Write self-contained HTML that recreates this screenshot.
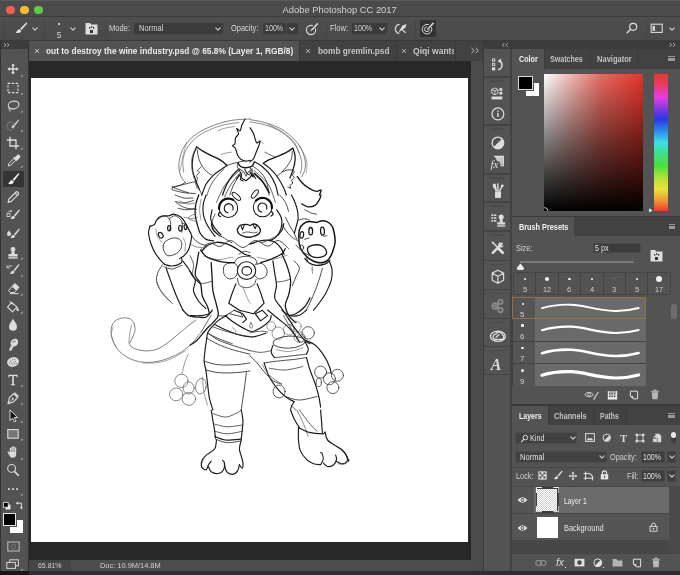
<!DOCTYPE html>
<html lang="en"><head><meta charset="utf-8"><title>Adobe Photoshop CC 2017</title>
<style>
html,body{margin:0;padding:0;background:#535353;}
body{width:680px;height:575px;overflow:hidden;position:relative;font-family:"Liberation Sans",sans-serif;}
#app{position:absolute;left:0;top:0;width:680px;height:575px;overflow:hidden;will-change:transform;}
#app div,#app svg,#app span{position:absolute;display:block;}
#app span{white-space:pre;line-height:1;transform-origin:0 50%;}
</style></head>
<body>
<div id="app">
<div style="left:0px;top:0px;width:680px;height:16px;background:#4b4b4b;"></div>
<div style="left:0px;top:16px;width:680px;height:25px;background:#4b4b4b;border-top:1px solid #3c3c3c;box-sizing:border-box;background:linear-gradient(#4e4e4e,#4a4a4a);"></div>
<div style="left:0px;top:0px;width:680px;height:1px;background:#5a5a5a;"></div>
<div style="left:0px;top:40px;width:680px;height:1px;background:#3a3a3a;"></div>
<div style="left:6.199999999999999px;top:5.5px;width:8.8px;height:8.8px;background:#f25e57;border-radius:50%;"></div>
<div style="left:20.0px;top:5.5px;width:8.8px;height:8.8px;background:#f6bc30;border-radius:50%;"></div>
<div style="left:34.1px;top:5.5px;width:8.8px;height:8.8px;background:#5ccb44;border-radius:50%;"></div>
<span style="left:282.6px;top:5.10px;font-size:9.4px;font-weight:400;color:#d2d2d2;">Adobe Photoshop CC 2017</span>
<div style="left:3px;top:21px;width:1px;height:16px;background:#434343;"></div>
<svg style="left:14px;top:21px;" width="14" height="14" viewBox="0 0 14 14"><path d="M12.6 1.2 L6.2 7.6 L7.6 9 L13.2 2.4 Z" fill="#e0e0e0"/><path d="M5.6 8.2 C3.6 8.2 3.4 10.4 1.6 11.6 C3.6 12.6 7 12.2 7.2 9.6 Z" fill="#e0e0e0"/></svg>
<svg style="left:30.5px;top:25px;" width="8" height="8" viewBox="0 0 8 8"><path d="M1.7999999999999998 2.9L4 5.1L6.2 2.9" fill="none" stroke="#d0d0d0" stroke-width="1.1" stroke-linecap="round" stroke-linejoin="round"/></svg>
<div style="left:44px;top:21px;width:1px;height:16px;background:#434343;"></div>
<div style="left:58.4px;top:23.3px;width:1.4px;height:1.4px;background:#e0e0e0;border-radius:50%;"></div>
<span style="left:56.8px;top:30.55px;font-size:8.5px;font-weight:400;color:#d8d8d8;">5</span>
<svg style="left:69px;top:24.5px;" width="8" height="8" viewBox="0 0 8 8"><path d="M1.7999999999999998 2.9L4 5.1L6.2 2.9" fill="none" stroke="#d0d0d0" stroke-width="1.1" stroke-linecap="round" stroke-linejoin="round"/></svg>
<svg style="left:85px;top:22px;" width="13" height="13" viewBox="0 0 13 13"><path d="M0.5 1 h4.5 l1.2 1.6 h6.3 v9.9 h-12 z" fill="#dedede"/><rect x="5" y="8" width="3" height="3" fill="#333"/><rect x="4" y="5" width="1.3" height="1.6" fill="#333"/><rect x="6" y="4.2" width="1.3" height="1.6" fill="#333"/><rect x="8" y="5" width="1.3" height="1.6" fill="#333"/></svg>
<div style="left:105px;top:21px;width:1px;height:16px;background:#434343;"></div>
<span style="left:108.5px;top:24.25px;font-size:8.5px;font-weight:400;color:#d6d6d6;transform:scaleX(0.889);">Mode:</span>
<div style="left:134.4px;top:22.8px;width:89px;height:11px;background:#3b3b3b;border-radius:1.5px;"></div>
<span style="left:139px;top:24.25px;font-size:8.5px;font-weight:400;color:#d6d6d6;transform:scaleX(0.894);">Normal</span>
<svg style="left:213.5px;top:24.7px;" width="8" height="8" viewBox="0 0 8 8"><path d="M1.7999999999999998 2.9L4 5.1L6.2 2.9" fill="none" stroke="#d0d0d0" stroke-width="1.1" stroke-linecap="round" stroke-linejoin="round"/></svg>
<span style="left:230.6px;top:24.25px;font-size:8.5px;font-weight:400;color:#d6d6d6;transform:scaleX(0.879);">Opacity:</span>
<div style="left:262.9px;top:22.8px;width:23.6px;height:11px;background:#3b3b3b;border-radius:1.5px;"></div>
<div style="left:287.2px;top:22.8px;width:10.4px;height:11px;background:#3b3b3b;border-radius:1.5px;"></div>
<span style="left:265px;top:24.25px;font-size:8.5px;font-weight:400;color:#d6d6d6;transform:scaleX(0.837);">100%</span>
<svg style="left:288.4px;top:24.7px;" width="8" height="8" viewBox="0 0 8 8"><path d="M1.7999999999999998 2.9L4 5.1L6.2 2.9" fill="none" stroke="#d0d0d0" stroke-width="1.1" stroke-linecap="round" stroke-linejoin="round"/></svg>
<svg style="left:304px;top:21px;" width="16" height="16" viewBox="0 0 16 16"><circle cx="7" cy="9" r="4.6" fill="none" stroke="#dcdcdc" stroke-width="1.1"/><path d="M7.2 9.4 L13 2.6" stroke="#484848" stroke-width="3.4"/><path d="M6.6 9.8 L8 8 L13.2 2.2 L14 3 L8.6 8.8 Z" fill="#e4e4e4" stroke="#e4e4e4" stroke-width="0.6"/></svg>
<div style="left:326px;top:21px;width:1px;height:16px;background:#434343;"></div>
<span style="left:329.8px;top:24.25px;font-size:8.5px;font-weight:400;color:#d6d6d6;transform:scaleX(0.896);">Flow:</span>
<div style="left:351.5px;top:22.8px;width:24.2px;height:11px;background:#3b3b3b;border-radius:1.5px;"></div>
<div style="left:376.4px;top:22.8px;width:10.4px;height:11px;background:#3b3b3b;border-radius:1.5px;"></div>
<span style="left:353.6px;top:24.25px;font-size:8.5px;font-weight:400;color:#d6d6d6;transform:scaleX(0.837);">100%</span>
<svg style="left:377.6px;top:24.7px;" width="8" height="8" viewBox="0 0 8 8"><path d="M1.7999999999999998 2.9L4 5.1L6.2 2.9" fill="none" stroke="#d0d0d0" stroke-width="1.1" stroke-linecap="round" stroke-linejoin="round"/></svg>
<svg style="left:393px;top:21px;" width="16" height="16" viewBox="0 0 16 16"><path d="M6.6 3.4 C3.6 3.6 2 6 2.4 8.6 C2.8 11 4.6 12.4 6.6 12.2" fill="none" stroke="#dcdcdc" stroke-width="1.2"/><path d="M5.4 11.6 L9.4 4.4 L13.4 3 L12.6 6.4 Z" fill="#dcdcdc"/><path d="M8.8 8.4 L12.6 11.8" stroke="#dcdcdc" stroke-width="1.2"/></svg>
<div style="left:415px;top:21px;width:1px;height:16px;background:#434343;"></div>
<div style="left:420px;top:20.4px;width:16px;height:16.2px;background:#333;"></div>
<svg style="left:420px;top:20.4px;" width="16" height="16.2" viewBox="0 0 16 16.2"><circle cx="7" cy="9.2" r="4.8" fill="none" stroke="#d4d4d4" stroke-width="1"/><circle cx="7" cy="9.2" r="2.4" fill="none" stroke="#d4d4d4" stroke-width="1"/><path d="M7.4 9 L12.6 3" stroke="#333" stroke-width="3.4"/><path d="M7 9.6 L8.2 8 L13 2.6 L13.8 3.4 L8.8 8.8 Z" fill="#e4e4e4" stroke="#e4e4e4" stroke-width="0.5"/></svg>
<svg style="left:625px;top:21px;" width="14" height="14" viewBox="0 0 14 14"><circle cx="8.2" cy="5.8" r="3.5" fill="none" stroke="#dcdcdc" stroke-width="1.2"/><path d="M5.7 8.3 L2.2 11.8" stroke="#dcdcdc" stroke-width="1.4" stroke-linecap="round"/></svg>
<div style="left:645.6px;top:21px;width:1px;height:16px;background:#434343;"></div>
<svg style="left:650px;top:23px;" width="14" height="11" viewBox="0 0 14 11"><rect x="1.2" y="1.2" width="11" height="8.2" fill="none" stroke="#dcdcdc" stroke-width="1.1"/><rect x="2.6" y="3" width="2.4" height="4.8" fill="#dcdcdc"/></svg>
<svg style="left:668px;top:24.7px;" width="8" height="8" viewBox="0 0 8 8"><path d="M1.7999999999999998 2.9L4 5.1L6.2 2.9" fill="none" stroke="#d0d0d0" stroke-width="1.1" stroke-linecap="round" stroke-linejoin="round"/></svg>
<div style="left:0px;top:41px;width:29px;height:530px;background:#333;"></div>
<div style="left:1px;top:41px;width:26.5px;height:8px;background:#3c3c3c;"></div>
<svg style="left:3px;top:42px;" width="8" height="6" viewBox="0 0 8 6"><path d="M1 1.2 L3 3 L1 4.8 M4 1.2 L6 3 L4 4.8" fill="none" stroke="#b8b8b8" stroke-width="0.8"/></svg>
<div style="left:1px;top:49px;width:26.5px;height:522px;background:#535353;"></div>
<div style="left:7px;top:51.5px;width:13px;height:1.5px;background:#4b4b4b;"></div>
<div style="left:29px;top:41px;width:454.5px;height:19.7px;background:#424242;"></div>
<div style="left:29px;top:41px;width:270px;height:19.7px;background:#535353;"></div>
<div style="left:298.9px;top:41px;width:1px;height:19.7px;background:#383838;"></div>
<div style="left:396px;top:41px;width:1px;height:19.7px;background:#383838;"></div>
<div style="left:454.7px;top:41px;width:1px;height:19.7px;background:#383838;"></div>
<svg style="left:33.5px;top:47.6px;" width="6" height="6" viewBox="0 0 6 6"><path d="M1 1 L5 5 M5 1 L1 5" stroke="#c8c8c8" stroke-width="0.9"/></svg>
<span style="left:46px;top:46.50px;font-size:8.6px;font-weight:700;color:#ececec;transform:scaleX(0.973);">out to destroy the wine industry.psd @ 65.8% (Layer 1, RGB/8)</span>
<svg style="left:304.7px;top:47.6px;" width="6" height="6" viewBox="0 0 6 6"><path d="M1 1 L5 5 M5 1 L1 5" stroke="#b4b4b4" stroke-width="0.9"/></svg>
<span style="left:317.6px;top:46.50px;font-size:8.6px;font-weight:700;color:#c4c4c4;transform:scaleX(0.959);">bomb gremlin.psd</span>
<svg style="left:401.4px;top:47.6px;" width="6" height="6" viewBox="0 0 6 6"><path d="M1 1 L5 5 M5 1 L1 5" stroke="#b4b4b4" stroke-width="0.9"/></svg>
<div style="left:413.2px;top:41px;width:41.2px;height:19.7px;overflow:hidden;"><span style="left:0.0px;top:5.50px;font-size:8.6px;font-weight:700;color:#c4c4c4;transform:scaleX(0.994);">Qiqi wants</span></div>
<svg style="left:470px;top:47px;" width="10" height="8" viewBox="0 0 10 8"><path d="M1.5 1 L4.2 3.6 L1.5 6.2 M5.6 1 L8.3 3.6 L5.6 6.2" fill="none" stroke="#c0c0c0" stroke-width="1"/></svg>
<div style="left:29px;top:60.7px;width:442px;height:499px;background:#282828;"></div>
<div style="left:31.4px;top:78.3px;width:436.9px;height:463.7px;background:#ffffff;"></div>
<div style="left:471px;top:60.7px;width:12.5px;height:510px;background:#4b4b4b;"></div>
<div style="left:29px;top:559.7px;width:442px;height:11px;background:#4d4d4d;"></div>
<div style="left:29px;top:559.7px;width:41.5px;height:11px;background:#464646;"></div>
<span style="left:38px;top:561.60px;font-size:8px;font-weight:400;color:#d0d0d0;transform:scaleX(0.866);">65.81%</span>
<span style="left:99.8px;top:561.60px;font-size:8px;font-weight:400;color:#d0d0d0;transform:scaleX(0.928);">Doc: 10.9M/14.8M</span>
<div style="left:3px;top:170.8px;width:21px;height:16.2px;background:#343434;"></div>
<svg style="left:4px;top:60.3px;" width="18" height="18" viewBox="0 0 18 18"><path d="M9 3.4 L11 5.8 H9.7 V8.3 H12.2 V7 L14.6 9 L12.2 11 V9.7 H9.7 V12.2 H11 L9 14.6 L7 12.2 H8.3 V9.7 H5.8 V11 L3.4 9 L5.8 7 V8.3 H8.3 V5.8 H7 Z" fill="#dcdcdc"/></svg>
<svg style="left:20.4px;top:73.7px;" width="3" height="3" viewBox="0 0 3 3"><path d="M2.6 0.4 V2.6 H0.4 Z" fill="#bdbdbd"/></svg>
<svg style="left:4px;top:78.5px;" width="18" height="18" viewBox="0 0 18 18"><rect x="4" y="4.4" width="10" height="9.2" fill="none" stroke="#dcdcdc" stroke-width="1.1" stroke-dasharray="2.4 1.4"/></svg>
<svg style="left:20.4px;top:91.9px;" width="3" height="3" viewBox="0 0 3 3"><path d="M2.6 0.4 V2.6 H0.4 Z" fill="#bdbdbd"/></svg>
<svg style="left:4px;top:97px;" width="18" height="18" viewBox="0 0 18 18"><ellipse cx="9.6" cy="8" rx="5.4" ry="3.8" fill="none" stroke="#dcdcdc" stroke-width="1.1" transform="rotate(-12 9.6 8)"/><path d="M6 10.8 C4.6 11 4.4 12.6 5.6 13 C6.4 13.2 6.6 14 5.8 14.6" fill="none" stroke="#dcdcdc" stroke-width="1"/></svg>
<svg style="left:20.4px;top:110.4px;" width="3" height="3" viewBox="0 0 3 3"><path d="M2.6 0.4 V2.6 H0.4 Z" fill="#bdbdbd"/></svg>
<svg style="left:4px;top:115.6px;" width="18" height="18" viewBox="0 0 18 18"><ellipse cx="6.6" cy="10" rx="3.4" ry="4" fill="none" stroke="#a8a8a8" stroke-width="0.9" stroke-dasharray="1.2 0.9"/><path d="M14.4 3.4 L10 8.6 L11.2 9.6 L15 4.2 Z" fill="#dcdcdc"/><path d="M9.6 9 C8.4 9 8.2 10.6 7 11.4 C8.4 12.2 10.8 11.8 11 10 Z" fill="#dcdcdc"/></svg>
<svg style="left:20.4px;top:129.0px;" width="3" height="3" viewBox="0 0 3 3"><path d="M2.6 0.4 V2.6 H0.4 Z" fill="#bdbdbd"/></svg>
<svg style="left:4px;top:133.5px;" width="18" height="18" viewBox="0 0 18 18"><path d="M6 2.8 V12 H15.2 M2.8 6 H12 V15.2" fill="none" stroke="#dcdcdc" stroke-width="1.3"/></svg>
<svg style="left:20.4px;top:146.9px;" width="3" height="3" viewBox="0 0 3 3"><path d="M2.6 0.4 V2.6 H0.4 Z" fill="#bdbdbd"/></svg>
<svg style="left:4px;top:151.8px;" width="18" height="18" viewBox="0 0 18 18"><path d="M4.2 14 L5 11.4 L10 6.4 L11.8 8.2 L6.8 13.2 Z" fill="none" stroke="#dcdcdc" stroke-width="1"/><path d="M9.6 5.2 L12.8 8.4 M10.8 6.4 L13.6 3.6 a1.3 1.3 0 0 1 1.8 1.8 L12.6 8.2" stroke="#dcdcdc" stroke-width="1.4" fill="#dcdcdc"/></svg>
<svg style="left:20.4px;top:165.20000000000002px;" width="3" height="3" viewBox="0 0 3 3"><path d="M2.6 0.4 V2.6 H0.4 Z" fill="#bdbdbd"/></svg>
<svg style="left:4px;top:169.7px;" width="18" height="18" viewBox="0 0 18 18"><path d="M14.6 3 L8.6 9.6 L10 11 L15.4 4 Z" fill="#f2f2f2"/><path d="M8 10.2 C6 10 5.8 12.4 4 13.6 C6 14.8 9.6 14.4 9.8 11.6 Z" fill="#f2f2f2"/></svg>
<svg style="left:4px;top:188px;" width="18" height="18" viewBox="0 0 18 18"><path d="M4 14.4 L5 11 L12 4 a1 1 0 0 1 1.4 0 L14.4 5 a1 1 0 0 1 0 1.4 L7.4 13.4 Z M11 5 L13.4 7.4" fill="none" stroke="#dcdcdc" stroke-width="1.1" stroke-linejoin="round"/></svg>
<svg style="left:4px;top:206px;" width="18" height="18" viewBox="0 0 18 18"><path d="M15 3.4 L10 9.2 L11.2 10.4 L15.8 4.4 Z" fill="#dcdcdc"/><path d="M9.4 9.8 C8 9.8 7.8 11.6 6.4 12.6 C8 13.6 10.8 13.2 11 11 Z" fill="#dcdcdc"/><rect x="3" y="7.6" width="3" height="3" fill="none" stroke="#dcdcdc" stroke-width="0.8"/><path d="M4 6.4 C4.4 4.8 6 4.4 7.2 5.2 M7.4 4 V5.6 H5.8" fill="none" stroke="#dcdcdc" stroke-width="0.8"/></svg>
<svg style="left:4px;top:224.5px;" width="18" height="18" viewBox="0 0 18 18"><path d="M15 3.4 L10 9.2 L11.2 10.4 L15.8 4.4 Z" fill="#dcdcdc"/><path d="M9.4 9.8 C8 9.8 7.8 11.6 6.4 12.6 C8 13.6 10.8 13.2 11 11 Z" fill="#dcdcdc"/><path d="M5 5.6 C6.4 7.4 7 8.2 7 9 a2 2 0 0 1 -4 0 C3 8.2 3.6 7.4 5 5.6 Z" fill="#dcdcdc"/></svg>
<svg style="left:4px;top:243.8px;" width="18" height="18" viewBox="0 0 18 18"><circle cx="9" cy="5.4" r="2.4" fill="#dcdcdc"/><path d="M7.8 7 H10.2 L10.8 10 H13.6 V12.4 H4.4 V10 H7.2 Z" fill="#dcdcdc"/><rect x="4.4" y="13.2" width="9.2" height="1.4" fill="#dcdcdc"/></svg>
<svg style="left:20.4px;top:257.2px;" width="3" height="3" viewBox="0 0 3 3"><path d="M2.6 0.4 V2.6 H0.4 Z" fill="#bdbdbd"/></svg>
<svg style="left:4px;top:261px;" width="18" height="18" viewBox="0 0 18 18"><path d="M14.6 3 L9.6 9 L10.8 10.2 L15.4 4 Z" fill="#dcdcdc"/><path d="M9 9.6 C7.6 9.6 7.4 11.4 6 12.4 C7.6 13.4 10.4 13 10.6 10.8 Z" fill="#dcdcdc"/><path d="M3.4 6.4 C4.4 4.6 6.6 4.4 8.2 5.4 M3 4.4 V6.8 H5.4" fill="none" stroke="#dcdcdc" stroke-width="0.9"/></svg>
<svg style="left:20.4px;top:274.4px;" width="3" height="3" viewBox="0 0 3 3"><path d="M2.6 0.4 V2.6 H0.4 Z" fill="#bdbdbd"/></svg>
<svg style="left:4px;top:279.5px;" width="18" height="18" viewBox="0 0 18 18"><path d="M10.8 3.6 L15 7.2 L10.4 12.6 H6.6 L4.4 10.6 Z" fill="none" stroke="#dcdcdc" stroke-width="1"/><path d="M10.8 3.6 L15 7.2 L12.2 10.4 L8 6.8 Z" fill="#dcdcdc"/><path d="M6 13.6 H14.6" stroke="#dcdcdc" stroke-width="1"/></svg>
<svg style="left:20.4px;top:292.9px;" width="3" height="3" viewBox="0 0 3 3"><path d="M2.6 0.4 V2.6 H0.4 Z" fill="#bdbdbd"/></svg>
<svg style="left:4px;top:297.7px;" width="18" height="18" viewBox="0 0 18 18"><path d="M7.6 4.4 L13 9.2 L8.4 13.8 L3.6 9 Z" fill="none" stroke="#dcdcdc" stroke-width="1.1" stroke-linejoin="round"/><path d="M5.4 3 L9.2 6.6" stroke="#dcdcdc" stroke-width="1"/><path d="M12.6 8.4 C14 9.6 15 11.2 14.8 12.4 a1.3 1.3 0 0 1 -2.4 -0.4 C12.4 11 12.8 9.8 12.6 8.4 Z" fill="#dcdcdc"/></svg>
<svg style="left:20.4px;top:311.09999999999997px;" width="3" height="3" viewBox="0 0 3 3"><path d="M2.6 0.4 V2.6 H0.4 Z" fill="#bdbdbd"/></svg>
<svg style="left:4px;top:316px;" width="18" height="18" viewBox="0 0 18 18"><path d="M9 2.8 C10.8 6 13 8.2 13 10.8 a4 4 0 0 1 -8 0 C5 8.2 7.2 6 9 2.8 Z" fill="#dcdcdc"/></svg>
<svg style="left:4px;top:334.5px;" width="18" height="18" viewBox="0 0 18 18"><path d="M5 15.4 C5.6 13 6.6 11.6 7.6 10.6 C6.4 9.6 6 8 7 6.4 C8 4.4 10.6 3.2 12.6 4 C14.4 4.8 14.6 7.4 13.6 9.2 C12.6 11 10.8 11.4 9.6 11.6 C8.8 12.8 8 14 7.6 15.4 Z" fill="#dcdcdc"/><path d="M8.2 7.4 C9.2 6.4 10.6 6 11.8 6.4" fill="none" stroke="#535353" stroke-width="0.8"/></svg>
<svg style="left:4px;top:352.7px;" width="18" height="18" viewBox="0 0 18 18"><ellipse cx="9" cy="9" rx="6" ry="4.8" fill="#dcdcdc" transform="rotate(-18 9 9)"/><g fill="#535353"><circle cx="6.4" cy="8" r="0.5"/><circle cx="8.4" cy="6.8" r="0.5"/><circle cx="10.6" cy="6.6" r="0.5"/><circle cx="7.4" cy="10" r="0.5"/><circle cx="9.4" cy="9" r="0.5"/><circle cx="11.4" cy="8.6" r="0.5"/><circle cx="8.8" cy="11.4" r="0.5"/><circle cx="10.8" cy="10.6" r="0.5"/><circle cx="12.4" cy="10.2" r="0.5"/><circle cx="5.6" cy="10" r="0.5"/></g></svg>
<svg style="left:4px;top:370.7px;" width="18" height="18" viewBox="0 0 18 18"><path d="M4.4 3.8 H13.6 V6.4 H12.8 L12.4 4.9 H9.8 V13 L11.2 13.4 V14.2 H6.8 V13.4 L8.2 13 V4.9 H5.6 L5.2 6.4 H4.4 Z" fill="#dcdcdc"/></svg>
<svg style="left:20.4px;top:384.09999999999997px;" width="3" height="3" viewBox="0 0 3 3"><path d="M2.6 0.4 V2.6 H0.4 Z" fill="#bdbdbd"/></svg>
<svg style="left:4px;top:389px;" width="18" height="18" viewBox="0 0 18 18"><path d="M4 14.6 L5.2 9 L9.6 4.6 L13.6 8.6 L9.2 13 Z" fill="none" stroke="#dcdcdc" stroke-width="1.1" stroke-linejoin="round" /><path d="M4 14.6 L8.4 10.2" stroke="#dcdcdc" stroke-width="0.9"/><circle cx="8.8" cy="9.8" r="1" fill="#dcdcdc"/><path d="M10.4 3.8 L14.4 7.8" stroke="#dcdcdc" stroke-width="1.6"/></svg>
<svg style="left:20.4px;top:402.4px;" width="3" height="3" viewBox="0 0 3 3"><path d="M2.6 0.4 V2.6 H0.4 Z" fill="#bdbdbd"/></svg>
<svg style="left:4px;top:407px;" width="18" height="18" viewBox="0 0 18 18"><path d="M6 3 L6 13.6 L8.6 11.2 L10.4 15 L12 14.2 L10.2 10.6 L13.6 10.4 Z" fill="#111" stroke="#e8e8e8" stroke-width="0.9" stroke-linejoin="round"/></svg>
<svg style="left:20.4px;top:420.4px;" width="3" height="3" viewBox="0 0 3 3"><path d="M2.6 0.4 V2.6 H0.4 Z" fill="#bdbdbd"/></svg>
<svg style="left:4px;top:425px;" width="18" height="18" viewBox="0 0 18 18"><rect x="3.8" y="4.6" width="10.4" height="8.6" fill="#757575" stroke="#dcdcdc" stroke-width="1.1"/></svg>
<svg style="left:20.4px;top:438.4px;" width="3" height="3" viewBox="0 0 3 3"><path d="M2.6 0.4 V2.6 H0.4 Z" fill="#bdbdbd"/></svg>
<svg style="left:4px;top:443.4px;" width="18" height="18" viewBox="0 0 18 18"><path d="M5.8 9.6 V5.6 a0.8 0.8 0 0 1 1.6 0 V4.2 a0.8 0.8 0 0 1 1.6 0 V4 a0.8 0.8 0 0 1 1.6 0.4 V5 a0.8 0.8 0 0 1 1.6 0.4 V11 C12.2 13.4 11 14.8 9 14.8 C7.2 14.8 6.4 14 5.4 12.4 L3.6 9.6 C3.4 8.8 4.4 8.2 5 9 Z" fill="#dcdcdc"/><path d="M7.4 5.6 V9 M9 4.4 V9 M10.6 5 V9" stroke="#535353" stroke-width="0.5"/></svg>
<svg style="left:20.4px;top:456.79999999999995px;" width="3" height="3" viewBox="0 0 3 3"><path d="M2.6 0.4 V2.6 H0.4 Z" fill="#bdbdbd"/></svg>
<svg style="left:4px;top:461px;" width="18" height="18" viewBox="0 0 18 18"><circle cx="7.6" cy="7.4" r="3.9" fill="none" stroke="#dcdcdc" stroke-width="1.1"/><path d="M10.4 10.4 L14.4 14.4" stroke="#dcdcdc" stroke-width="1.5" stroke-linecap="round"/></svg>
<svg style="left:4px;top:480px;" width="18" height="18" viewBox="0 0 18 18"><g fill="#dcdcdc"><rect x="4" y="8.2" width="1.8" height="1.8"/><rect x="8.1" y="8.2" width="1.8" height="1.8"/><rect x="12.2" y="8.2" width="1.8" height="1.8"/></g></svg>
<svg style="left:20.4px;top:493.4px;" width="3" height="3" viewBox="0 0 3 3"><path d="M2.6 0.4 V2.6 H0.4 Z" fill="#bdbdbd"/></svg>
<svg style="left:2.6px;top:502px;" width="8" height="8" viewBox="0 0 8 8"><rect x="2.6" y="2.6" width="4.8" height="4.8" fill="#f4f4f4"/><rect x="0.6" y="0.6" width="4.6" height="4.6" fill="#000" stroke="#e8e8e8" stroke-width="0.8"/></svg>
<svg style="left:14.6px;top:501px;" width="9" height="9" viewBox="0 0 9 9"><path d="M2.6 2.2 H6.4 V6.8" fill="none" stroke="#e0e0e0" stroke-width="1"/><path d="M0.8 2.2 L3 0.6 V3.8 Z M6.4 8.4 L4.8 6.2 H8 Z" fill="#e0e0e0"/></svg>
<div style="left:10.4px;top:520.2px;width:12.8px;height:12.8px;background:#ffffff;"></div>
<div style="left:3px;top:513px;width:13.4px;height:13.4px;background:#000;border:1px solid #e4e4e4;box-sizing:border-box;outline:0.7px solid #535353;"></div>
<svg style="left:6.6px;top:540.6px;" width="13" height="11" viewBox="0 0 13 11"><rect x="0.8" y="1" width="11.4" height="9" fill="none" stroke="#bdbdbd" stroke-width="1"/><circle cx="6.5" cy="5.5" r="2.2" fill="none" stroke="#9a9a9a" stroke-width="0.9" stroke-dasharray="1 0.8"/></svg>
<svg style="left:6.4px;top:559.4px;" width="14" height="11" viewBox="0 0 14 11"><rect x="3.8" y="0.8" width="8.6" height="6" fill="none" stroke="#d4d4d4" stroke-width="1"/><rect x="0.8" y="3.4" width="8.6" height="6" fill="#535353" stroke="#d4d4d4" stroke-width="1"/></svg>
<svg style="left:20.4px;top:568px;" width="3" height="3" viewBox="0 0 3 3"><path d="M2.6 0.4 V2.6 H0.4 Z" fill="#bdbdbd"/></svg>
<div style="left:483px;top:41px;width:197px;height:530px;background:#424242;"></div>
<div style="left:483px;top:41px;width:197px;height:8px;background:#3c3c3c;"></div>
<div style="left:483px;top:49px;width:1px;height:522px;background:#3b3b3b;"></div>
<svg style="left:500.5px;top:41.6px;" width="9" height="6" viewBox="0 0 9 6"><path d="M3.4 1 L1.4 3 L3.4 5 M6.8 1 L4.8 3 L6.8 5" fill="none" stroke="#bdbdbd" stroke-width="0.8"/></svg>
<svg style="left:667.5px;top:42px;" width="9" height="6" viewBox="0 0 9 6"><path d="M1.6 1 L3.6 3 L1.6 5 M5 1 L7 3 L5 5" fill="none" stroke="#bdbdbd" stroke-width="0.8"/></svg>
<div style="left:484px;top:49px;width:26.4px;height:522px;background:#535353;"></div>
<div style="left:490px;top:51.5px;width:14px;height:1.6px;background:#4b4b4b;"></div>
<div style="left:484px;top:76.4px;width:26.4px;height:1.2px;background:#444;"></div>
<div style="left:490px;top:80px;width:14px;height:1.6px;background:#4b4b4b;"></div>
<div style="left:484px;top:124.4px;width:26.4px;height:1.2px;background:#444;"></div>
<div style="left:490px;top:128px;width:14px;height:1.6px;background:#4b4b4b;"></div>
<div style="left:484px;top:173.4px;width:26.4px;height:1.2px;background:#444;"></div>
<div style="left:490px;top:177px;width:14px;height:1.6px;background:#4b4b4b;"></div>
<div style="left:484px;top:201.4px;width:26.4px;height:1.2px;background:#444;"></div>
<div style="left:490px;top:205px;width:14px;height:1.6px;background:#4b4b4b;"></div>
<div style="left:484px;top:230.4px;width:26.4px;height:1.2px;background:#444;"></div>
<div style="left:490px;top:234px;width:14px;height:1.6px;background:#4b4b4b;"></div>
<div style="left:484px;top:260.09999999999997px;width:26.4px;height:1.2px;background:#444;"></div>
<div style="left:490px;top:263.7px;width:14px;height:1.6px;background:#4b4b4b;"></div>
<div style="left:484px;top:288.9px;width:26.4px;height:1.2px;background:#444;"></div>
<div style="left:490px;top:292.5px;width:14px;height:1.6px;background:#4b4b4b;"></div>
<div style="left:484px;top:317.9px;width:26.4px;height:1.2px;background:#444;"></div>
<div style="left:490px;top:321.5px;width:14px;height:1.6px;background:#4b4b4b;"></div>
<div style="left:484px;top:346.0px;width:26.4px;height:1.2px;background:#444;"></div>
<div style="left:490px;top:349.6px;width:14px;height:1.6px;background:#4b4b4b;"></div>
<div style="left:484px;top:374.09999999999997px;width:26.4px;height:1.2px;background:#444;"></div>
<svg style="left:487.60px;top:55.10px;" width="19.80" height="19.80" viewBox="0 0 18 18"><g fill="#dedede"><rect x="3.6" y="3.2" width="3" height="2.8"/><rect x="3.6" y="7.2" width="3" height="2.8"/><rect x="3.6" y="11.2" width="3" height="2.8"/></g><rect x="4.4" y="7.9" width="1.4" height="1.4" fill="#535353"/><rect x="4.4" y="3.9" width="1.4" height="1.2" fill="#535353"/><path d="M9.2 13.4 C13.6 12.4 13.8 7.4 10.6 5.4" fill="none" stroke="#dedede" stroke-width="1.3"/><path d="M8.6 5.6 L12 3.2 L11.8 7.2 Z" fill="#dedede"/></svg>
<svg style="left:487.60px;top:84.10px;" width="19.80" height="19.80" viewBox="0 0 18 18"><path d="M6.2 3.6 L9 5 V8.4 L6.2 9.8 L3.4 8.4 V5 Z M3.4 5 L6.2 6.4 L9 5 M6.2 6.4 V9.8" fill="none" stroke="#dedede" stroke-width="0.8"/><rect x="10.4" y="3.8" width="2.6" height="2.4" fill="#dedede"/><rect x="10.4" y="7.2" width="2.6" height="2.4" fill="#dedede"/><rect x="3.2" y="11.4" width="9.8" height="2.6" fill="#dedede"/></svg>
<svg style="left:487.60px;top:104.10px;" width="19.80" height="19.80" viewBox="0 0 18 18"><circle cx="9" cy="9" r="5.4" fill="none" stroke="#dedede" stroke-width="1.1"/><rect x="8.4" y="8" width="1.3" height="3.8" fill="#dedede"/><rect x="8.4" y="5.8" width="1.3" height="1.3" fill="#dedede"/></svg>
<svg style="left:487.60px;top:132.60px;" width="19.80" height="19.80" viewBox="0 0 18 18"><circle cx="9" cy="9" r="5.3" fill="none" stroke="#dedede" stroke-width="1.2"/><path d="M5.2 12.8 A5.3 5.3 0 0 0 12.8 5.2 Z" fill="#dedede"/></svg>
<svg style="left:487.60px;top:153.10px;" width="19.80" height="19.80" viewBox="0 0 18 18"><path d="M5.4 3 H14 V11.6 H11" fill="none" stroke="#dedede" stroke-width="1.1"/><path d="M6.4 3.6 h7 v7 h-2 l-1 -3 l-2 0 z" fill="#dedede" opacity="0.85"/><text x="2.2" y="14" font-family="Liberation Serif,serif" font-style="italic" font-size="10" fill="#dedede">fx</text></svg>
<svg style="left:487.60px;top:181.10px;" width="19.80" height="19.80" viewBox="0 0 18 18"><rect x="6.4" y="9.4" width="5.4" height="6" fill="#dedede"/><path d="M7.6 9 L5.2 4.6 C4.6 3.4 5.6 2.2 6.4 3.4 Z M9 9 V2.6 M10.6 9 L12.8 4.8" stroke="#dedede" stroke-width="1.3" fill="#dedede" stroke-linecap="round"/><circle cx="13" cy="4.4" r="1.3" fill="#dedede"/><ellipse cx="5.6" cy="4.4" rx="1.2" ry="1.8" fill="#dedede"/></svg>
<svg style="left:487.60px;top:210.10px;" width="19.80" height="19.80" viewBox="0 0 18 18"><g fill="#dedede"><rect x="3" y="4" width="1.6" height="1.4"/><rect x="5.2" y="4" width="2.4" height="1.4"/><rect x="3" y="6.6" width="1.6" height="1.4"/><rect x="5.2" y="6.6" width="2.4" height="1.4"/><rect x="3" y="9.2" width="1.6" height="1.4"/><rect x="5.2" y="9.2" width="2.4" height="1.4"/><circle cx="12" cy="6.4" r="2.3"/><path d="M11 8 h2 l0.6 3.4 h-3.2 z"/><rect x="8.4" y="11.2" width="7.2" height="2"/><rect x="8.4" y="14" width="7.2" height="1.2"/></g></svg>
<svg style="left:487.60px;top:238.10px;" width="19.80" height="19.80" viewBox="0 0 18 18"><path d="M4.4 13.6 L12.4 5.2" stroke="#dedede" stroke-width="2.2" stroke-linecap="round"/><path d="M11.2 3.6 a2.6 2.6 0 1 0 3.2 3.2 l-1.8 0.4 l-1.6 -1.6 z" fill="#dedede"/><path d="M4.6 4.4 L10 10" stroke="#dedede" stroke-width="1.3"/><path d="M3.2 3 L5.6 3.8 L4 5.4 Z" fill="#dedede"/><path d="M10 10 L13.4 13.4" stroke="#dedede" stroke-width="2.4" stroke-linecap="round"/></svg>
<svg style="left:487.60px;top:267.10px;" width="19.80" height="19.80" viewBox="0 0 18 18"><path d="M9 3 L14.2 5.6 V12 L9 14.8 L3.8 12 V5.6 Z M3.8 5.6 L9 8.4 L14.2 5.6 M9 8.4 V14.8" fill="none" stroke="#dedede" stroke-width="1.1" stroke-linejoin="round"/></svg>
<svg style="left:487.60px;top:296.10px;" width="19.80" height="19.80" viewBox="0 0 18 18"><g fill="none" stroke="#8a8a8a" stroke-width="1.6"><circle cx="11.4" cy="5.2" r="2"/><circle cx="11.4" cy="12.8" r="2"/><path d="M9.8 6.2 L6 9 L9.8 11.8"/><circle cx="6.6" cy="9" r="2.6"/></g></svg>
<svg style="left:487.60px;top:325.60px;" width="19.80" height="19.80" viewBox="0 0 18 18"><g fill="none" stroke="#dedede" stroke-width="1.2"><ellipse cx="9" cy="9.4" rx="6.8" ry="4.6"/><path d="M4.6 10.4 a2.6 2.6 0 0 1 2.6 -3 a3.2 3.2 0 0 1 6 0.6 a2.3 2.3 0 0 1 -0.4 4.2 H7 a2.4 2.4 0 0 1 -2.4 -1.8 z"/><path d="M7 10.4 L10.4 7.6"/></g></svg>
<svg style="left:487.60px;top:353.70px;" width="19.80" height="19.80" viewBox="0 0 18 18"><text x="2.6" y="14.4" font-family="Liberation Serif,serif" font-style="italic" font-weight="700" font-size="14.5" fill="#dedede">A</text></svg>
<div style="left:512.3px;top:48.5px;width:167.7px;height:20.5px;background:#424242;"></div>
<div style="left:512.3px;top:48.5px;width:31.5px;height:20.5px;background:#535353;"></div>
<div style="left:590px;top:48.5px;width:1px;height:20.5px;background:#3a3a3a;"></div>
<div style="left:637px;top:48.5px;width:1px;height:20.5px;background:#3a3a3a;"></div>
<div style="left:543.8px;top:48.5px;width:1px;height:20.5px;background:#3a3a3a;"></div>
<span style="left:518.8px;top:55.00px;font-size:8.6px;font-weight:700;color:#f0f0f0;transform:scaleX(0.838);">Color</span>
<span style="left:550.3px;top:55.00px;font-size:8.6px;font-weight:700;color:#c2c2c2;transform:scaleX(0.825);">Swatches</span>
<span style="left:596.7px;top:55.00px;font-size:8.6px;font-weight:700;color:#c2c2c2;transform:scaleX(0.878);">Navigator</span>
<div style="left:668.3px;top:56.4px;width:6.4px;height:0.7px;background:#9a9a9a;"></div>
<div style="left:668.3px;top:57.6px;width:6.4px;height:0.7px;background:#9a9a9a;"></div>
<div style="left:668.3px;top:58.8px;width:6.4px;height:0.7px;background:#9a9a9a;"></div>
<div style="left:668.3px;top:60.0px;width:6.4px;height:0.7px;background:#9a9a9a;"></div>
<div style="left:512.3px;top:69px;width:167.7px;height:147px;background:#535353;"></div>
<div style="left:526.2px;top:83.2px;width:13px;height:13px;background:#ffffff;"></div>
<div style="left:518.4px;top:75.6px;width:14.2px;height:14.2px;background:#000;border:1px solid #d8d8d8;box-sizing:border-box;outline:0.6px solid #535353;"></div>
<div style="left:544px;top:74px;width:98.5px;height:137px;background:linear-gradient(to bottom,rgba(0,0,0,0) 0%,rgba(0,0,0,0.5) 48%,#000 100%),linear-gradient(to right,#ffffff 0%,#f0b3ae 28%,#e86a61 58%,#e6342a 100%);"></div>
<svg style="left:544px;top:204.6px;" width="8" height="6.4" viewBox="0 0 8 6.4"><circle cx="0.4" cy="6.2" r="3.6" fill="none" stroke="#e0e0e0" stroke-width="0.9"/><circle cx="0.4" cy="6.2" r="4.5" fill="none" stroke="#222" stroke-width="0.7"/></svg>
<div style="left:654.3px;top:74px;width:13.6px;height:137px;background:linear-gradient(to bottom,#e8382f 0%,#ea3a5c 7%,#e43ee0 17%,#7a38e0 26%,#2a36e6 33%,#2f8ee8 42%,#3fdde6 50%,#3fe08a 58%,#4ade3c 67%,#b4e23a 76%,#ece23a 84%,#ee9a34 92%,#ea3c2e 100%);"></div>
<svg style="left:648.4px;top:207.4px;" width="6" height="7" viewBox="0 0 6 7"><path d="M0.8 0.8 L5 3.4 L0.8 6 Z" fill="#f4f4f4" stroke="#3a3a3a" stroke-width="0.5"/></svg>
<div style="left:512.3px;top:215.6px;width:167.7px;height:1.6px;background:#3a3a3a;"></div>
<div style="left:512.3px;top:217px;width:167.7px;height:19.4px;background:#424242;"></div>
<div style="left:512.3px;top:217px;width:61.5px;height:19.4px;background:#535353;"></div>
<span style="left:518.8px;top:222.60px;font-size:8.6px;font-weight:700;color:#f0f0f0;transform:scaleX(0.848);">Brush Presets</span>
<div style="left:668.6px;top:224.4px;width:6.4px;height:0.7px;background:#9a9a9a;"></div>
<div style="left:668.6px;top:225.6px;width:6.4px;height:0.7px;background:#9a9a9a;"></div>
<div style="left:668.6px;top:226.8px;width:6.4px;height:0.7px;background:#9a9a9a;"></div>
<div style="left:668.6px;top:228.0px;width:6.4px;height:0.7px;background:#9a9a9a;"></div>
<div style="left:512.3px;top:235.8px;width:167.7px;height:168.4px;background:#535353;"></div>
<span style="left:515.5px;top:243.75px;font-size:8.5px;font-weight:400;color:#d6d6d6;transform:scaleX(0.862);">Size:</span>
<div style="left:592.6px;top:242.5px;width:48.1px;height:10.8px;background:#3c3c3c;border:1px solid #4a4a4a;box-sizing:border-box;"></div>
<span style="left:594.5px;top:243.75px;font-size:8.5px;font-weight:400;color:#e4e4e4;transform:scaleX(0.840);">5 px</span>
<svg style="left:649.8px;top:248.6px;" width="13" height="13" viewBox="0 0 13 13"><path d="M0.5 1 h4.5 l1.2 1.6 h6.3 v9.9 h-12 z" fill="#dedede"/><rect x="5" y="8" width="3" height="3" fill="#333"/><rect x="4" y="5" width="1.3" height="1.6" fill="#333"/><rect x="6" y="4.2" width="1.3" height="1.6" fill="#333"/><rect x="8" y="5" width="1.3" height="1.6" fill="#333"/></svg>
<div style="left:519.5px;top:261.3px;width:114px;height:1.4px;background:#7a7a7a;"></div>
<svg style="left:516px;top:263.2px;" width="9" height="8" viewBox="0 0 9 8"><path d="M4.4 0.6 L8 5 Q8 7 6.4 7 H2.4 Q0.8 7 0.8 5 Z" fill="#f2f2f2"/></svg>
<div style="left:513.0px;top:272px;width:157.79999999999998px;height:23px;background:#444;"></div>
<div style="left:514px;top:273px;width:21px;height:21px;background:#535353;"></div>
<div style="left:523.7px;top:277.7px;width:2.0px;height:2.0px;background:#f2f2f2;border-radius:50%;"></div>
<span style="left:522.6px;top:285.80px;font-size:8px;font-weight:400;color:#cfcfcf;transform:scaleX(0.943);">5</span>
<div style="left:536px;top:273px;width:22px;height:21px;background:#535353;"></div>
<div style="left:545.0px;top:276.59999999999997px;width:4.2px;height:4.2px;background:#f2f2f2;border-radius:50%;"></div>
<span style="left:543.1px;top:285.80px;font-size:8px;font-weight:400;color:#cfcfcf;transform:scaleX(0.898);">12</span>
<div style="left:559px;top:273px;width:21px;height:21px;background:#535353;"></div>
<div style="left:568.4px;top:277.59999999999997px;width:2.2px;height:2.2px;background:#f2f2f2;border-radius:50%;"></div>
<span style="left:567.4px;top:285.80px;font-size:8px;font-weight:400;color:#cfcfcf;transform:scaleX(0.943);">6</span>
<div style="left:581px;top:273px;width:22px;height:21px;background:#535353;"></div>
<div style="left:591.0000000000001px;top:277.8px;width:1.8px;height:1.8px;background:#f2f2f2;border-radius:50%;"></div>
<span style="left:589.8000000000001px;top:285.80px;font-size:8px;font-weight:400;color:#cfcfcf;transform:scaleX(0.943);">4</span>
<div style="left:604px;top:273px;width:21px;height:21px;background:#535353;"></div>
<div style="left:613.5000000000001px;top:277.9px;width:1.6px;height:1.6px;background:#a8a8a8;border-radius:50%;"></div>
<span style="left:612.2px;top:285.80px;font-size:8px;font-weight:400;color:#cfcfcf;transform:scaleX(0.943);">3</span>
<div style="left:626px;top:273px;width:21px;height:21px;background:#535353;"></div>
<div style="left:635.7px;top:277.7px;width:2.0px;height:2.0px;background:#f2f2f2;border-radius:50%;"></div>
<span style="left:634.6px;top:285.80px;font-size:8px;font-weight:400;color:#cfcfcf;transform:scaleX(0.943);">5</span>
<div style="left:648px;top:273px;width:22px;height:21px;background:#535353;"></div>
<div style="left:656.1px;top:275.7px;width:6px;height:6px;background:#f2f2f2;border-radius:50%;"></div>
<span style="left:655.1px;top:285.80px;font-size:8px;font-weight:400;color:#cfcfcf;transform:scaleX(0.898);">17</span>
<div style="left:512.3px;top:296.8px;width:133.6px;height:89.6px;background:#424242;"></div>
<div style="left:512.8px;top:297.2px;width:22px;height:21.5px;background:#555555;"></div>
<div style="left:534.8px;top:297.2px;width:111px;height:21.5px;background:#6a6a6a;"></div>
<div style="left:521.5px;top:302.5px;width:2.0px;height:2.0px;background:#f4f4f4;border-radius:50%;"></div>
<span style="left:520.4px;top:310.80px;font-size:8px;font-weight:400;color:#d4d4d4;transform:scaleX(0.988);">5</span>
<svg style="left:534.8px;top:297.2px;" width="111" height="21.5" viewBox="0 0 111 21.5"><path d="M7 11.200000000000001 C 16 8.4, 26 7.4, 36 7.700000000000001 C 50 8.0, 60 13.4, 80 14.0 C 90 14.200000000000001, 97 12.8, 103.6 11.0" fill="none" stroke="#ffffff" stroke-width="1.9" stroke-linecap="round"/></svg>
<div style="left:512.8px;top:319.2px;width:22px;height:21.5px;background:#555555;"></div>
<div style="left:534.8px;top:319.2px;width:111px;height:21.5px;background:#6a6a6a;"></div>
<div style="left:521.4px;top:324.4px;width:2.2px;height:2.2px;background:#f4f4f4;border-radius:50%;"></div>
<span style="left:520.4px;top:332.80px;font-size:8px;font-weight:400;color:#d4d4d4;transform:scaleX(0.988);">6</span>
<svg style="left:534.8px;top:319.2px;" width="111" height="21.5" viewBox="0 0 111 21.5"><path d="M7 11.200000000000001 C 16 8.4, 26 7.4, 36 7.700000000000001 C 50 8.0, 60 13.4, 80 14.0 C 90 14.200000000000001, 97 12.8, 103.6 11.0" fill="none" stroke="#ffffff" stroke-width="2.2" stroke-linecap="round"/></svg>
<div style="left:512.8px;top:341.5px;width:22px;height:21.5px;background:#555555;"></div>
<div style="left:534.8px;top:341.5px;width:111px;height:21.5px;background:#6a6a6a;"></div>
<div style="left:521.25px;top:346.55px;width:2.5px;height:2.5px;background:#f4f4f4;border-radius:50%;"></div>
<span style="left:520.4px;top:355.10px;font-size:8px;font-weight:400;color:#d4d4d4;transform:scaleX(0.988);">7</span>
<svg style="left:534.8px;top:341.5px;" width="111" height="21.5" viewBox="0 0 111 21.5"><path d="M7 11.200000000000001 C 16 8.4, 26 7.4, 36 7.700000000000001 C 50 8.0, 60 13.4, 80 14.0 C 90 14.200000000000001, 97 12.8, 103.6 11.0" fill="none" stroke="#ffffff" stroke-width="2.6" stroke-linecap="round"/></svg>
<div style="left:512.8px;top:364.3px;width:22px;height:22px;background:#555555;"></div>
<div style="left:534.8px;top:364.3px;width:111px;height:22px;background:#6a6a6a;"></div>
<div style="left:521.0px;top:369.1px;width:3.0px;height:3.0px;background:#f4f4f4;border-radius:50%;"></div>
<span style="left:520.4px;top:377.90px;font-size:8px;font-weight:400;color:#d4d4d4;transform:scaleX(0.988);">9</span>
<svg style="left:534.8px;top:364.3px;" width="111" height="22" viewBox="0 0 111 22"><path d="M7 11.200000000000001 C 16 8.4, 26 7.4, 36 7.700000000000001 C 50 8.0, 60 13.4, 80 14.0 C 90 14.200000000000001, 97 12.8, 103.6 11.0" fill="none" stroke="#ffffff" stroke-width="3.2" stroke-linecap="round"/></svg>
<div style="left:512.3px;top:296.8px;width:133.8px;height:22.3px;background:transparent;border:1px solid #94713f;box-sizing:border-box;"></div>
<div style="left:671px;top:304.4px;width:6.2px;height:14.2px;background:#6e6e6e;border-radius:3px;"></div>
<svg style="left:583px;top:388px;" width="18" height="14" viewBox="0 0 18 14"><path d="M1.6 6.6 Q6 2 10.4 6.6 Q6 11 1.6 6.6 Z" fill="none" stroke="#c8c8c8" stroke-width="1"/><circle cx="6" cy="6.6" r="1.5" fill="none" stroke="#c8c8c8" stroke-width="0.9"/><path d="M10.6 11.6 L15.2 4" stroke="#c8c8c8" stroke-width="1.3"/></svg>
<svg style="left:606.5px;top:389.5px;" width="11" height="11" viewBox="0 0 11 11"><rect x="0.8" y="1" width="9.4" height="8.6" fill="#e8e8e8"/><rect x="2" y="3.2" width="1.6" height="1.4" fill="#444"/><rect x="4.4" y="3.2" width="1.6" height="1.4" fill="#444"/><rect x="6.8" y="3.2" width="1.6" height="1.4" fill="#444"/><rect x="2" y="5.6" width="1.6" height="1.4" fill="#444"/><rect x="4.4" y="5.6" width="1.6" height="1.4" fill="#444"/><rect x="6.8" y="5.6" width="1.6" height="1.4" fill="#444"/><rect x="2" y="1.6" width="7" height="0.8" fill="#444"/></svg>
<svg style="left:629.4px;top:389.8px;" width="10" height="10" viewBox="0 0 10 10"><path d="M1.4 1.2 H8.6 V8.8 H4.2 L1.4 6 Z" fill="none" stroke="#e0e0e0" stroke-width="1"/><path d="M1.4 6 H4.2 V8.8 Z" fill="#e0e0e0"/><rect x="1.4" y="1.2" width="3.4" height="3.6" fill="#e0e0e0" opacity="0.0"/></svg>
<svg style="left:650px;top:389.3px;" width="10" height="11" viewBox="0 0 10 11"><path d="M1.8 3.2 H8.2 L7.6 10.2 H2.4 Z" fill="#b8b8b8"/><rect x="1" y="1.8" width="8" height="1" fill="#b8b8b8"/><rect x="3.6" y="0.6" width="2.8" height="1.4" fill="#b8b8b8"/></svg>
<div style="left:512.3px;top:404.2px;width:167.7px;height:1.6px;background:#3a3a3a;"></div>
<div style="left:512.3px;top:405.8px;width:167.7px;height:19.3px;background:#424242;"></div>
<div style="left:512.3px;top:405.8px;width:35.7px;height:19.3px;background:#535353;"></div>
<div style="left:548px;top:405.8px;width:1px;height:19.3px;background:#3a3a3a;"></div>
<div style="left:594px;top:405.8px;width:1px;height:19.3px;background:#3a3a3a;"></div>
<div style="left:625.9px;top:405.8px;width:1px;height:19.3px;background:#3a3a3a;"></div>
<span style="left:518.8px;top:411.90px;font-size:8.6px;font-weight:700;color:#f0f0f0;transform:scaleX(0.815);">Layers</span>
<span style="left:554.4px;top:411.90px;font-size:8.6px;font-weight:700;color:#c2c2c2;transform:scaleX(0.843);">Channels</span>
<span style="left:600.3px;top:411.90px;font-size:8.6px;font-weight:700;color:#c2c2c2;transform:scaleX(0.807);">Paths</span>
<div style="left:668.3px;top:413.4px;width:6.4px;height:0.7px;background:#9a9a9a;"></div>
<div style="left:668.3px;top:414.59999999999997px;width:6.4px;height:0.7px;background:#9a9a9a;"></div>
<div style="left:668.3px;top:415.79999999999995px;width:6.4px;height:0.7px;background:#9a9a9a;"></div>
<div style="left:668.3px;top:417.0px;width:6.4px;height:0.7px;background:#9a9a9a;"></div>
<div style="left:512.3px;top:425.1px;width:167.7px;height:145.5px;background:#535353;"></div>
<div style="left:515.2px;top:432px;width:61.7px;height:11.6px;background:#414141;border:1px solid #4c4c4c;box-sizing:border-box;border-radius:1.5px;"></div>
<svg style="left:519.5px;top:433.5px;" width="9" height="9" viewBox="0 0 9 9"><circle cx="5.4" cy="3.6" r="2.3" fill="none" stroke="#dcdcdc" stroke-width="1"/><path d="M3.8 5.4 L1.4 7.8" stroke="#dcdcdc" stroke-width="1.2" stroke-linecap="round"/></svg>
<span style="left:529.9px;top:433.65px;font-size:8.5px;font-weight:400;color:#e0e0e0;transform:scaleX(0.846);">Kind</span>
<svg style="left:568.9px;top:434px;" width="8" height="8" viewBox="0 0 8 8"><path d="M1.7999999999999998 2.9L4 5.1L6.2 2.9" fill="none" stroke="#d0d0d0" stroke-width="1.1" stroke-linecap="round" stroke-linejoin="round"/></svg>
<svg style="left:584.6px;top:433.2px;" width="10" height="9" viewBox="0 0 10 9"><rect x="0.6" y="0.6" width="8.8" height="7.8" fill="none" stroke="#d8d8d8" stroke-width="1"/><path d="M1.6 7.2 L3.6 4.4 L5 6 L6.4 4.8 L8.4 7.2 Z" fill="#d8d8d8"/></svg>
<svg style="left:601.8px;top:433px;" width="10" height="10" viewBox="0 0 10 10"><circle cx="4.8" cy="4.8" r="3.7" fill="none" stroke="#d8d8d8" stroke-width="1"/><path d="M2.2 7.4 A3.7 3.7 0 0 0 7.4 2.2 Z" fill="#d8d8d8"/></svg>
<span style="left:619.6px;top:432.50px;font-size:11px;font-weight:700;color:#d8d8d8;transform:scaleX(0.980);font-family:'Liberation Serif',serif;">T</span>
<svg style="left:635.2px;top:433px;" width="10" height="10" viewBox="0 0 10 10"><rect x="2" y="2" width="6" height="6" fill="none" stroke="#d8d8d8" stroke-width="1"/><g fill="#d8d8d8"><rect x="0.6" y="0.6" width="2.4" height="2.4"/><rect x="7" y="0.6" width="2.4" height="2.4"/><rect x="0.6" y="7" width="2.4" height="2.4"/><rect x="7" y="7" width="2.4" height="2.4"/></g></svg>
<svg style="left:652.4px;top:432.6px;" width="10" height="10" viewBox="0 0 10 10"><path d="M3.4 0.8 H7.2 L9.2 2.8 V9.2 H3.4 Z" fill="#d8d8d8"/><rect x="0.8" y="5.6" width="4.4" height="3.6" fill="#d8d8d8" stroke="#535353" stroke-width="0.6"/><path d="M1.8 5.6 V4.4 a1.2 1.2 0 0 1 2.4 0 V5.6" fill="none" stroke="#d8d8d8" stroke-width="0.8"/></svg>
<div style="left:671.2px;top:434.6px;width:4.8px;height:8px;background:#3c3c3c;border-radius:2.4px;"></div>
<div style="left:670.8px;top:432.2px;width:5.6px;height:5.6px;background:#e8e8e8;border-radius:50%;"></div>
<div style="left:515.2px;top:451px;width:91.4px;height:11.6px;background:#414141;border:1px solid #4c4c4c;box-sizing:border-box;border-radius:1.5px;"></div>
<span style="left:520px;top:452.75px;font-size:8.5px;font-weight:400;color:#e0e0e0;transform:scaleX(0.887);">Normal</span>
<svg style="left:598.3px;top:453.2px;" width="8" height="8" viewBox="0 0 8 8"><path d="M1.7999999999999998 2.9L4 5.1L6.2 2.9" fill="none" stroke="#d0d0d0" stroke-width="1.1" stroke-linecap="round" stroke-linejoin="round"/></svg>
<span style="left:610.3px;top:452.75px;font-size:8.5px;font-weight:400;color:#cfcfcf;transform:scaleX(0.856);">Opacity:</span>
<div style="left:641px;top:451px;width:24.4px;height:11.6px;background:#3e3e3e;border:1px solid #494949;box-sizing:border-box;"></div>
<div style="left:667px;top:451px;width:9.4px;height:11.6px;background:#3e3e3e;border:1px solid #494949;box-sizing:border-box;"></div>
<span style="left:642.9px;top:452.75px;font-size:8.5px;font-weight:400;color:#e0e0e0;transform:scaleX(0.832);">100%</span>
<svg style="left:667.7px;top:453.2px;" width="8" height="8" viewBox="0 0 8 8"><path d="M1.7999999999999998 2.9L4 5.1L6.2 2.9" fill="none" stroke="#d0d0d0" stroke-width="1.1" stroke-linecap="round" stroke-linejoin="round"/></svg>
<div style="left:512.3px;top:466.6px;width:167.7px;height:1px;background:#474747;"></div>
<span style="left:515.8px;top:471.75px;font-size:8.5px;font-weight:400;color:#cfcfcf;transform:scaleX(0.861);">Lock:</span>
<svg style="left:538px;top:471.2px;" width="9" height="9" viewBox="0 0 9 9"><rect x="0.4" y="0.4" width="8.2" height="8.2" fill="#e4e4e4"/><g fill="#4a4a4a"><rect x="1.4" y="1.4" width="2" height="2"/><rect x="5.4" y="1.4" width="2" height="2"/><rect x="3.4" y="3.4" width="2" height="2"/><rect x="1.4" y="5.4" width="2" height="2"/><rect x="5.4" y="5.4" width="2" height="2"/></g></svg>
<svg style="left:553px;top:470.4px;" width="10" height="10.5" viewBox="0 0 10 10.5"><path d="M9 0.6 L4.2 5.8 L5.2 6.8 L9.6 1.4 Z" fill="#e4e4e4"/><path d="M3.8 6.2 C2.4 6.2 2.4 7.8 1 8.8 C2.4 9.6 5 9.2 5.2 7.4 Z" fill="#e4e4e4"/></svg>
<svg style="left:568.2px;top:470.8px;" width="10" height="10" viewBox="0 0 10 10"><path d="M5 0.6 L6.6 2.6 H5.5 V4.5 H7.4 V3.4 L9.4 5 L7.4 6.6 V5.5 H5.5 V7.4 H6.6 L5 9.4 L3.4 7.4 H4.5 V5.5 H2.6 V6.6 L0.6 5 L2.6 3.4 V4.5 H4.5 V2.6 H3.4 Z" fill="#e4e4e4"/></svg>
<svg style="left:583.4px;top:470.6px;" width="11" height="10" viewBox="0 0 11 10"><path d="M2.6 0.6 V8.8 M0.6 2.6 H7.2 L9.4 4.8 V9.4 M0.8 7.2 H10.4" fill="none" stroke="#e4e4e4" stroke-width="1"/><path d="M6.4 2.6 L9.4 5.6" stroke="#e4e4e4" stroke-width="0.9"/></svg>
<svg style="left:599.9px;top:470.4px;" width="9" height="10" viewBox="0 0 9 10"><rect x="0.8" y="4.2" width="7.4" height="5.2" fill="#e4e4e4"/><path d="M2.4 4.4 V3 a2.1 2.1 0 0 1 4.2 0 V4.4" fill="none" stroke="#e4e4e4" stroke-width="1.1"/><rect x="3.9" y="5.8" width="1.2" height="2" fill="#535353"/></svg>
<span style="left:627px;top:471.75px;font-size:8.5px;font-weight:400;color:#cfcfcf;transform:scaleX(0.861);">Fill:</span>
<div style="left:641px;top:470.2px;width:24.4px;height:11.4px;background:#3e3e3e;border:1px solid #494949;box-sizing:border-box;"></div>
<div style="left:667px;top:470.2px;width:9.4px;height:11.4px;background:#3e3e3e;border:1px solid #494949;box-sizing:border-box;"></div>
<span style="left:642.9px;top:471.55px;font-size:8.5px;font-weight:400;color:#e0e0e0;transform:scaleX(0.832);">100%</span>
<svg style="left:667.7px;top:472px;" width="8" height="8" viewBox="0 0 8 8"><path d="M1.7999999999999998 2.9L4 5.1L6.2 2.9" fill="none" stroke="#d0d0d0" stroke-width="1.1" stroke-linecap="round" stroke-linejoin="round"/></svg>
<div style="left:512.3px;top:486.4px;width:157px;height:67px;background:#474747;"></div>
<div style="left:512.3px;top:487px;width:22px;height:26px;background:#555;"></div>
<div style="left:534.3px;top:487px;width:135px;height:26px;background:#6b6b6b;"></div>
<div style="left:512.3px;top:513.8px;width:157px;height:26.6px;background:#555;"></div>
<svg style="left:517.4px;top:496.2px;" width="11" height="8" viewBox="0 0 11 8"><path d="M0.6 4 Q5.5 -1.4 10.4 4 Q5.5 9.4 0.6 4 Z" fill="#ececec"/><circle cx="5.5" cy="4" r="1.9" fill="#555"/><circle cx="5.5" cy="4" r="0.9" fill="#ececec"/></svg>
<svg style="left:517.4px;top:523.6px;" width="11" height="8" viewBox="0 0 11 8"><path d="M0.6 4 Q5.5 -1.4 10.4 4 Q5.5 9.4 0.6 4 Z" fill="#ececec"/><circle cx="5.5" cy="4" r="1.9" fill="#555"/><circle cx="5.5" cy="4" r="0.9" fill="#ececec"/></svg>
<div style="left:535.6px;top:487.4px;width:23.4px;height:25.2px;background:#3c3c3c;"></div>
<div style="left:537.2px;top:489px;width:20.2px;height:22px;background-color:#fff;background-image:linear-gradient(45deg,#cfcfcf 25%,transparent 25%,transparent 75%,#cfcfcf 75%),linear-gradient(45deg,#cfcfcf 25%,transparent 25%,transparent 75%,#cfcfcf 75%);background-size:2px 2px;background-position:0 0,1px 1px;"></div>
<svg style="left:535.6px;top:487.4px;" width="23.4" height="25.2" viewBox="0 0 23.4 25.2"><path d="M0.5 6 V0.5 H6 M17.4 0.5 H22.9 V6 M22.9 19.2 V24.7 H17.4 M6 24.7 H0.5 V19.2" fill="none" stroke="#f0f0f0" stroke-width="1"/></svg>
<div style="left:537px;top:517px;width:20.7px;height:21px;background:#ffffff;"></div>
<span style="left:564px;top:496.75px;font-size:8.5px;font-weight:400;color:#ececec;transform:scaleX(0.800);">Layer 1</span>
<span style="left:564px;top:524.35px;font-size:8.5px;font-weight:400;color:#e4e4e4;transform:scaleX(0.875);">Background</span>
<svg style="left:648.8px;top:522.4px;" width="9" height="10" viewBox="0 0 9 10"><rect x="1" y="4.4" width="7" height="4.8" fill="none" stroke="#e0e0e0" stroke-width="0.9"/><path d="M2.6 4.4 V3 a1.9 1.9 0 0 1 3.8 0 V4.4" fill="none" stroke="#e0e0e0" stroke-width="0.9"/><rect x="3.9" y="6" width="1.2" height="1.6" fill="#e0e0e0"/></svg>
<div style="left:669.3px;top:486.4px;width:10.7px;height:67px;background:#4a4a4a;"></div>
<div style="left:512.3px;top:553.2px;width:167.7px;height:1px;background:#444;"></div>
<svg style="left:535.2px;top:558.6px;" width="12" height="8" viewBox="0 0 12 8"><rect x="0.8" y="1.6" width="5.6" height="4.6" rx="2.3" fill="none" stroke="#8c8c8c" stroke-width="1.1"/><rect x="5.4" y="1.6" width="5.6" height="4.6" rx="2.3" fill="none" stroke="#8c8c8c" stroke-width="1.1"/></svg>
<span style="left:556.4px;top:557.35px;font-size:10.5px;font-weight:400;color:#dcdcdc;transform:scaleX(0.979);font-style:italic;">fx</span>
<div style="left:564.8px;top:567.2px;width:1.2px;height:1.2px;background:#e8e8e8;"></div>
<svg style="left:574px;top:558px;" width="11" height="9" viewBox="0 0 11 9"><rect x="0.6" y="0.8" width="9.8" height="7.6" fill="#e0e0e0"/><circle cx="5.5" cy="4.6" r="2.3" fill="#4a4a4a"/></svg>
<svg style="left:593.4px;top:557.8px;" width="10" height="10" viewBox="0 0 10 10"><circle cx="4.8" cy="4.8" r="3.9" fill="none" stroke="#e0e0e0" stroke-width="1"/><path d="M2 7.6 A3.9 3.9 0 0 0 7.6 2 Z" fill="#e0e0e0"/></svg>
<div style="left:603px;top:567.2px;width:1.2px;height:1.2px;background:#e8e8e8;"></div>
<svg style="left:612px;top:558px;" width="11" height="9" viewBox="0 0 11 9"><path d="M0.6 1 H4.4 L5.4 2.4 H10.4 V8.4 H0.6 Z" fill="#b4b4b4"/></svg>
<svg style="left:631.5px;top:557.6px;" width="10" height="10" viewBox="0 0 10 10"><path d="M1.4 1.2 H8.6 V8.8 H4.2 L1.4 6 Z" fill="none" stroke="#e0e0e0" stroke-width="1"/><path d="M1.4 6 H4.2 V8.8 Z" fill="#e0e0e0"/><rect x="1.4" y="1.2" width="3.4" height="3.6" fill="#e0e0e0" opacity="0.0"/></svg>
<svg style="left:650.6px;top:556.9px;" width="10" height="11" viewBox="0 0 10 11"><path d="M1.8 3.2 H8.2 L7.6 10.2 H2.4 Z" fill="#b8b8b8"/><rect x="1" y="1.8" width="8" height="1" fill="#b8b8b8"/><rect x="3.6" y="0.6" width="2.8" height="1.4" fill="#b8b8b8"/></svg>
<svg style="left:0;top:0;" width="680" height="575" viewBox="0 0 680 575" fill="none" stroke-linecap="round" stroke-linejoin="round"><path d="M244.7 119.2C242.2 119.4 234.8 119.7 229.9 120.7C225.0 121.6 219.8 123.1 215.1 124.8C210.4 126.5 205.7 128.5 201.8 130.7C197.8 132.9 194.4 135.4 191.4 138.1C188.5 140.8 185.9 144.0 184.0 147.0C182.2 149.9 181.2 152.9 180.3 155.9C179.5 158.8 179.0 162.0 178.8 164.7C178.7 167.4 179.1 169.9 179.6 172.1C180.1 174.3 180.8 176.3 181.8 178.0C182.8 179.8 184.9 181.7 185.5 182.5" stroke="#666" stroke-width="0.83"/><path d="M238.8 122.6C236.3 122.9 228.9 123.6 224.0 124.8C219.0 126.0 213.6 128.0 209.2 130.0C204.7 131.9 200.5 134.3 197.3 136.6C194.1 139.0 192.0 141.3 189.9 144.0C187.8 146.7 185.9 149.9 184.8 152.9C183.6 155.9 183.0 158.6 182.8 161.8C182.7 165.0 183.6 170.4 183.7 172.1" stroke="#666" stroke-width="0.72"/><path d="M234.3 126.6C232.8 126.8 228.2 127.4 225.4 128.0C222.7 128.7 219.3 130.3 218.0 130.7" stroke="#666" stroke-width="0.66"/><path d="M250.0 118.9 L244.7 119.2" stroke="#666" stroke-width="0.77"/><path d="M245.0 119.2C244.5 120.1 242.8 122.9 242.0 124.8C241.2 126.7 241.1 130.1 240.2 130.7C239.3 131.3 237.0 128.0 236.7 128.5C236.4 129.0 238.7 132.1 238.5 133.7C238.3 135.3 236.1 136.4 235.5 138.1C234.9 139.8 235.4 142.8 234.9 144.0C234.4 145.3 232.4 144.8 232.5 145.5C232.6 146.2 234.7 147.0 235.5 148.5C236.3 149.9 236.5 152.7 237.3 154.4C238.1 156.1 239.0 157.7 240.2 158.8C241.5 159.9 243.3 160.8 245.0 161.0C246.6 161.3 249.2 160.4 250.0 160.3" stroke="#1a1a1a" stroke-width="1.17"/><path d="M221.0 154.4C222.0 154.1 225.2 153.3 226.9 152.9C228.6 152.5 230.6 152.3 231.4 152.2" stroke="#666" stroke-width="0.66"/><path d="M196.6 147.0C196.1 148.2 194.4 151.7 193.6 154.4C192.9 157.1 192.3 160.3 192.2 163.3C192.0 166.2 192.3 169.2 192.9 172.1C193.5 175.1 194.7 178.0 195.9 181.0C197.0 184.0 198.9 188.4 199.6 189.9" stroke="#1a1a1a" stroke-width="1.30"/><path d="M195.1 148.8C194.6 150.4 192.2 155.4 191.7 158.8C191.2 162.2 191.6 165.7 192.0 169.2C192.5 172.6 194.0 177.8 194.4 179.5" stroke="#666" stroke-width="0.66"/><path d="M196.6 147.0C197.7 147.7 200.7 149.9 203.3 151.4C205.8 152.9 209.2 154.4 212.1 155.9C215.1 157.3 218.5 158.7 221.0 160.3C223.5 161.9 225.9 164.6 226.9 165.5" stroke="#1a1a1a" stroke-width="1.43"/><path d="M197.3 149.9C197.6 151.4 197.8 155.9 198.8 158.8C199.8 161.8 201.5 165.2 203.3 167.7C205.0 170.2 207.7 172.4 209.2 173.6C210.7 174.8 211.6 174.8 212.1 175.1" stroke="#333" stroke-width="0.88"/><path d="M201.0 167.0 L197.3 170.7 L199.6 172.1 L195.9 176.6 L198.1 178.0 L195.1 182.5 L197.3 188.4" stroke="#333" stroke-width="0.77"/><path d="M226.9 165.5C227.9 165.2 230.9 164.1 232.8 163.6C234.8 163.0 236.8 162.5 238.8 162.1C240.7 161.7 243.7 161.2 244.7 161.0" stroke="#333" stroke-width="0.88"/><path d="M226.9 165.5C225.7 166.3 221.7 169.0 219.5 170.7C217.3 172.3 215.8 172.9 213.6 175.1C211.4 177.3 208.2 180.6 206.2 184.0C204.2 187.3 202.5 193.2 201.8 195.1" stroke="#1a1a1a" stroke-width="1.17"/><path d="M224.0 169.2C222.7 170.4 218.8 173.9 216.6 176.6C214.3 179.3 212.3 182.4 210.7 185.4C209.0 188.5 207.6 193.5 207.0 195.1" stroke="#333" stroke-width="0.77"/><path d="M185.5 182.5C184.5 183.0 181.8 184.7 179.6 185.4C177.4 186.2 173.4 186.7 172.2 186.9" stroke="#333" stroke-width="0.88"/><path d="M172.2 186.9C173.4 187.4 176.9 188.9 179.6 189.9C182.3 190.9 187.0 192.3 188.5 192.8" stroke="#333" stroke-width="0.88"/><path d="M199.6 189.9C199.8 190.4 200.7 192.0 201.0 192.8C201.4 193.7 201.7 194.7 201.8 195.1" stroke="#333" stroke-width="0.88"/><path d="M238.8 169.2C237.8 170.2 234.8 172.6 232.8 175.1C230.9 177.6 228.6 180.6 226.9 184.0C225.2 187.3 223.2 193.2 222.5 195.1" stroke="#1a1a1a" stroke-width="1.30"/><path d="M242.5 172.1C241.5 173.4 238.3 176.8 236.5 179.5C234.8 182.2 233.2 185.8 232.1 188.4C231.0 191.0 230.3 193.9 229.9 195.1" stroke="#333" stroke-width="0.88"/><path d="M238.8 162.1C238.5 162.8 237.3 165.0 237.3 166.2C237.3 167.4 238.5 168.7 238.8 169.2" stroke="#333" stroke-width="0.88"/><path d="M238.8 169.2 L241.7 175.1 L240.2 179.5 L243.2 181.0" stroke="#1a1a1a" stroke-width="1.04"/><path d="M244.7 169.2 L246.9 173.6 L250.0 175.1" stroke="#1a1a1a" stroke-width="1.04"/><path d="M250.0 119.6C252.0 120.0 257.9 120.8 261.8 121.8C265.8 122.8 270.0 124.1 273.7 125.5C277.4 127.0 280.8 128.6 284.0 130.7C287.2 132.8 290.2 135.4 292.9 138.1C295.6 140.8 298.4 144.0 300.3 147.0C302.1 149.9 303.1 152.9 304.0 155.9C304.9 158.8 305.5 162.0 305.5 164.7C305.5 167.4 304.6 170.2 304.0 172.1C303.4 174.1 302.1 175.8 301.8 176.6" stroke="#666" stroke-width="0.83"/><path d="M250.0 121.8C252.5 122.3 260.1 123.4 264.8 124.8C269.5 126.1 274.2 127.9 278.1 130.0C282.1 132.1 285.5 134.7 288.5 137.4C291.4 140.1 293.9 143.2 295.9 146.2C297.8 149.3 299.3 152.5 300.3 155.9C301.3 159.2 301.8 163.3 301.8 166.2C301.8 169.2 300.5 172.4 300.3 173.6" stroke="#666" stroke-width="0.77"/><path d="M267.8 124.1C270.2 125.4 278.1 129.1 282.5 132.2C287.0 135.3 291.7 139.1 294.4 142.5C297.1 146.0 298.1 151.2 298.8 152.9" stroke="#666" stroke-width="0.66"/><path d="M250.0 127.8C250.6 128.7 252.5 131.2 253.6 133.7C254.6 136.1 255.4 141.3 256.5 142.5C257.6 143.8 259.8 140.3 260.1 141.1C260.4 141.8 259.0 145.0 258.3 147.0C257.6 149.0 256.7 150.9 255.9 152.9C255.1 154.9 254.5 157.3 253.6 158.8C252.6 160.3 250.6 161.3 250.0 161.8" stroke="#1a1a1a" stroke-width="1.17"/><path d="M261.1 141.8 L263.3 143.3" stroke="#666" stroke-width="0.66"/><path d="M292.9 148.2C291.7 149.0 288.5 151.4 285.5 152.9C282.5 154.4 278.1 156.1 275.1 157.3C272.2 158.6 269.7 159.3 267.8 160.3C265.8 161.3 264.1 162.8 263.3 163.3" stroke="#1a1a1a" stroke-width="1.30"/><path d="M292.9 148.2C293.3 149.4 294.9 153.1 295.1 155.9C295.4 158.6 294.9 162.0 294.4 164.7C293.9 167.4 292.9 169.9 292.2 172.1C291.4 174.3 290.3 177.1 289.9 178.0" stroke="#1a1a1a" stroke-width="1.30"/><path d="M292.2 151.4C292.0 152.7 292.3 156.4 291.4 158.8C290.6 161.3 288.6 164.0 287.0 166.2C285.4 168.4 283.4 170.5 281.8 172.1C280.2 173.7 278.1 175.2 277.4 175.8" stroke="#333" stroke-width="0.88"/><path d="M264.8 152.2C265.8 152.7 268.9 154.3 270.7 155.1C272.6 156.0 275.0 157.0 275.9 157.3" stroke="#333" stroke-width="0.77"/><path d="M281.8 172.1 L287.0 169.9 L292.9 169.9 L294.4 172.1 L292.2 175.1 L294.4 177.3 L291.4 180.3 L292.9 183.2 L289.9 185.4 L290.7 188.4 L287.7 186.9" stroke="#333" stroke-width="0.88"/><path d="M297.3 176.6C298.1 177.6 299.8 180.5 301.8 182.5C303.7 184.5 306.7 186.9 309.2 188.4C311.6 189.9 314.6 191.1 316.6 191.4C318.5 191.6 320.5 189.3 321.0 189.9C321.5 190.5 319.8 194.2 319.5 195.1" stroke="#1a1a1a" stroke-width="1.43"/><path d="M254.4 161.8C255.7 162.5 259.4 164.2 261.8 166.2C264.3 168.2 267.0 170.7 269.2 173.6C271.4 176.6 273.7 180.4 275.1 184.0C276.6 187.5 277.6 193.2 278.1 195.1" stroke="#1a1a1a" stroke-width="1.17"/><path d="M263.3 163.3C264.5 164.2 268.2 166.7 270.7 169.2C273.2 171.6 275.9 174.8 278.1 178.0C280.3 181.3 282.7 185.6 284.0 188.4C285.4 191.2 285.9 193.9 286.2 195.1" stroke="#1a1a1a" stroke-width="1.17"/><path d="M253.0 166.2C254.2 167.2 258.1 169.7 260.4 172.1C262.6 174.6 264.8 177.2 266.3 181.0C267.8 184.8 268.7 192.7 269.2 195.1" stroke="#333" stroke-width="0.88"/><path d="M250.0 172.1 L253.0 176.6" stroke="#1a1a1a" stroke-width="1.56"/><path d="M250.0 167.7 L252.2 170.7 L251.5 175.1" stroke="#1a1a1a" stroke-width="1.04"/><path d="M150.0 226.1C150.7 225.8 153.3 225.6 154.4 224.6C155.5 223.6 155.4 221.5 156.7 220.1C157.9 218.8 159.7 217.2 161.8 216.4C163.9 215.7 167.3 216.1 169.2 215.7C171.2 215.3 171.7 214.0 173.7 214.2C175.6 214.5 179.1 215.7 181.1 217.2C183.0 218.7 184.3 221.1 185.5 223.1C186.7 225.1 187.5 227.1 188.5 229.0C189.4 231.0 191.1 232.7 191.4 234.9C191.8 237.2 191.2 239.9 190.7 242.3C190.2 244.8 189.6 247.5 188.5 249.7C187.4 252.0 185.5 254.2 184.0 255.7C182.5 257.1 180.3 258.1 179.6 258.6" stroke="#1a1a1a" stroke-width="1.17"/><path d="M150.0 226.1C149.8 227.3 148.3 230.3 148.5 233.5C148.8 236.7 150.2 241.8 151.5 245.3C152.7 248.7 154.2 251.5 155.9 254.2C157.6 256.9 160.4 259.8 161.8 261.6C163.3 263.3 164.3 264.0 164.8 264.5" stroke="#1a1a1a" stroke-width="1.17"/><path d="M156.7 220.1C157.0 219.7 157.5 217.9 158.9 217.2C160.2 216.4 163.1 215.5 164.8 215.7C166.5 216.0 168.2 217.2 169.2 218.7C170.2 220.1 170.7 222.6 170.7 224.6C170.7 226.6 169.5 229.5 169.2 230.5" stroke="#333" stroke-width="0.88"/><path d="M169.2 218.7C170.2 218.2 173.2 215.5 175.1 215.7C177.1 216.0 179.8 218.4 181.1 220.1C182.3 221.9 182.4 224.1 182.5 226.1C182.7 228.0 181.9 231.0 181.8 232.0" stroke="#333" stroke-width="0.88"/><path d="M181.8 223.1C182.5 223.4 185.1 223.6 186.2 224.6C187.4 225.6 188.1 228.3 188.5 229.0" stroke="#333" stroke-width="0.88"/><ellipse cx="160.7" cy="235.2" rx="2.1" ry="3.0" stroke="#1a1a1a" stroke-width="1.17" transform="rotate(-30 160.7 235.2)"/><ellipse cx="169.2" cy="228.3" rx="1.6" ry="2.7" stroke="#1a1a1a" stroke-width="1.17"/><ellipse cx="180.3" cy="228.3" rx="1.6" ry="2.8" stroke="#1a1a1a" stroke-width="1.17"/><ellipse cx="185.5" cy="227.2" rx="1.3" ry="2.5" stroke="#1a1a1a" stroke-width="1.17" transform="rotate(-10 185.5 227.2)"/><path d="M163.3 245.3C163.7 243.6 164.5 242.1 166.3 240.9C168.0 239.6 171.4 238.1 173.7 237.9C175.9 237.7 178.2 238.4 179.6 239.4C180.9 240.4 181.7 242.1 181.8 243.8C181.9 245.5 181.4 248.0 180.3 249.7C179.2 251.5 177.2 253.2 175.1 254.2C173.1 255.2 169.6 256.1 167.8 255.7C165.9 255.2 164.8 252.9 164.1 251.2C163.3 249.5 162.9 247.0 163.3 245.3Z" stroke="#333" stroke-width="0.94"/><path d="M164.8 264.5C166.0 264.8 169.5 266.3 172.2 266.0C174.9 265.8 179.5 264.3 181.1 263.0C182.7 261.8 181.7 259.3 181.8 258.6" stroke="#1a1a1a" stroke-width="1.17"/><path d="M164.1 266.7C165.4 267.1 169.2 269.2 172.2 269.0C175.1 268.7 180.2 265.9 181.8 265.3" stroke="#333" stroke-width="0.88"/><path d="M183.3 237.9C183.7 238.9 185.3 241.6 185.5 243.8C185.7 246.0 184.9 250.0 184.8 251.2" stroke="#666" stroke-width="0.66"/><path d="M155.9 229.0C156.2 230.3 156.4 234.2 157.4 236.4C158.4 238.6 161.1 241.4 161.8 242.3" stroke="#666" stroke-width="0.66"/><path d="M175.1 195.0C176.6 195.5 181.1 197.5 184.0 198.0C187.0 198.5 191.4 198.0 192.9 198.0" stroke="#333" stroke-width="0.88"/><path d="M179.6 200.9C180.8 201.4 184.5 203.5 187.0 203.9C189.4 204.2 193.1 203.3 194.4 203.1" stroke="#666" stroke-width="0.77"/><path d="M178.1 208.3C179.6 208.6 184.0 209.8 187.0 209.8C189.9 209.8 194.4 208.6 195.9 208.3" stroke="#333" stroke-width="0.88"/><path d="M184.0 217.2C185.3 217.4 189.2 218.7 191.4 218.7C193.6 218.7 196.4 217.4 197.3 217.2" stroke="#666" stroke-width="0.77"/><path d="M198.8 195.0C198.3 196.5 196.5 200.7 195.9 203.9C195.2 207.1 194.9 210.8 195.1 214.2C195.4 217.7 196.5 221.4 197.3 224.6C198.2 227.8 198.8 231.0 200.3 233.5C201.8 235.9 204.0 238.1 206.2 239.4C208.4 240.6 212.4 240.6 213.6 240.9" stroke="#1a1a1a" stroke-width="1.30"/><path d="M206.2 195.0C205.7 196.5 203.7 200.7 203.3 203.9C202.8 207.1 202.8 211.0 203.3 214.2C203.7 217.4 205.0 220.4 206.2 223.1C207.4 225.8 209.2 228.3 210.7 230.5C212.1 232.7 214.3 235.4 215.1 236.4" stroke="#1a1a1a" stroke-width="1.17"/><path d="M212.1 209.8C211.9 211.3 210.4 216.0 210.7 218.7C210.9 221.4 212.4 223.8 213.6 226.1C214.8 228.3 216.8 230.5 218.0 232.0C219.3 233.5 220.5 234.4 221.0 234.9" stroke="#1a1a1a" stroke-width="1.17"/><path d="M215.1 214.2C214.6 215.5 212.4 219.2 212.1 221.6C211.9 224.1 212.6 226.8 213.6 229.0C214.6 231.2 216.8 233.7 218.0 234.9C219.3 236.2 220.5 236.2 221.0 236.4" stroke="#333" stroke-width="0.88"/><path d="M201.0 199.4C200.8 201.2 199.6 206.3 199.6 209.8C199.6 213.2 200.8 218.4 201.0 220.1" stroke="#666" stroke-width="0.66"/><path d="M237.3 229.3C237.8 228.7 238.8 226.2 240.2 225.3C241.7 224.5 244.5 224.3 246.2 224.3C247.8 224.3 249.4 225.3 250.0 225.5" stroke="#1a1a1a" stroke-width="1.30"/><path d="M237.3 229.3C237.5 230.1 237.5 232.5 238.8 233.8C240.0 235.0 242.8 236.1 244.7 236.7C246.5 237.3 249.1 237.2 250.0 237.3" stroke="#1a1a1a" stroke-width="1.30"/><path d="M241.0 225.5 L242.5 229.9 L244.2 225.2" stroke="#1a1a1a" stroke-width="1.04"/><path d="M242.5 233.2C243.1 233.0 244.9 232.1 246.2 232.0C247.4 231.8 249.4 232.2 250.0 232.3" stroke="#333" stroke-width="0.77"/><path d="M201.8 251.2C202.8 250.2 205.2 246.8 207.7 245.3C210.2 243.8 213.4 242.6 216.6 242.3C219.8 242.1 223.7 242.8 226.9 243.8C230.1 244.8 232.8 246.5 235.8 248.3C238.8 250.0 242.3 252.9 244.7 254.2C247.0 255.4 249.1 255.4 250.0 255.7" stroke="#1a1a1a" stroke-width="1.30"/><path d="M191.4 234.9C191.9 235.7 192.9 237.9 194.4 239.4C195.9 240.9 198.3 242.8 200.3 243.8C202.3 244.8 205.2 245.0 206.2 245.3" stroke="#333" stroke-width="0.88"/><path d="M189.9 243.8C190.9 244.3 193.9 246.2 195.9 246.8C197.8 247.4 200.8 247.4 201.8 247.5" stroke="#666" stroke-width="0.77"/><path d="M238.8 254.2C239.7 253.7 242.8 251.5 244.7 251.2C246.5 251.0 249.1 252.4 250.0 252.7" stroke="#333" stroke-width="0.88"/><path d="M298.8 234.9C298.8 232.2 298.8 230.9 299.6 229.0C300.3 227.2 301.7 225.1 303.3 223.8C304.9 222.6 307.0 221.9 309.2 221.6C311.4 221.4 314.6 222.5 316.6 222.4C318.5 222.2 319.3 221.0 321.0 220.9C322.7 220.8 325.1 220.8 326.9 221.6C328.8 222.5 330.9 224.1 332.1 226.1C333.3 228.0 333.8 230.7 334.3 233.5C334.8 236.2 335.3 239.4 335.1 242.3C334.8 245.3 333.8 248.5 332.8 251.2C331.9 253.9 330.6 256.8 329.1 258.6C327.7 260.5 326.1 261.7 324.0 262.3C321.9 262.9 319.0 262.9 316.6 262.3C314.1 261.7 311.4 260.2 309.2 258.6C307.0 257.0 304.9 254.9 303.3 252.7C301.7 250.5 300.3 248.3 299.6 245.3C298.8 242.3 298.8 237.7 298.8 234.9Z" stroke="#141414" stroke-width="1.49"/><ellipse cx="301.8" cy="234.9" rx="1.8" ry="3.3" stroke="#1a1a1a" stroke-width="1.17" transform="rotate(8 301.8 234.9)"/><ellipse cx="310.7" cy="231.2" rx="1.9" ry="3.7" stroke="#1a1a1a" stroke-width="1.30"/><ellipse cx="322.5" cy="231.2" rx="1.9" ry="4.0" stroke="#1a1a1a" stroke-width="1.30" transform="rotate(-4 322.5 231.2)"/><ellipse cx="301.8" cy="247.5" rx="1.8" ry="2.7" stroke="#333" stroke-width="0.88" transform="rotate(-10 301.8 247.5)"/><path d="M307.7 248.3C308.2 246.8 309.9 245.8 312.1 245.3C314.3 244.8 318.8 244.7 321.0 245.3C323.2 245.9 324.6 247.5 325.4 249.0C326.3 250.5 326.9 252.8 326.2 254.2C325.4 255.5 323.1 256.6 321.0 257.1C318.9 257.6 315.6 257.6 313.6 257.1C311.6 256.6 310.2 255.7 309.2 254.2C308.2 252.7 307.2 249.7 307.7 248.3Z" stroke="#1a1a1a" stroke-width="1.30"/><path d="M304.7 239.4 L309.2 237.9" stroke="#333" stroke-width="0.88"/><path d="M324.0 236.4 L326.9 235.7" stroke="#333" stroke-width="0.88"/><path d="M304.7 258.6C305.5 259.3 307.2 261.9 309.2 263.0C311.1 264.2 313.9 265.1 316.6 265.3C319.3 265.4 323.2 264.6 325.4 263.8C327.7 262.9 329.1 260.7 329.9 260.1" stroke="#1a1a1a" stroke-width="1.30"/><path d="M306.2 257.1 L307.7 260.8" stroke="#333" stroke-width="0.88"/><path d="M312.1 266.0 L312.9 270.4" stroke="#666" stroke-width="0.66"/><path d="M291.4 195.0C291.9 196.0 293.4 198.5 294.4 200.9C295.4 203.4 296.7 206.8 297.3 209.8C298.0 212.8 298.3 215.7 298.1 218.7C297.8 221.6 296.5 225.1 295.9 227.5C295.2 230.0 294.6 232.5 294.4 233.5" stroke="#1a1a1a" stroke-width="1.17"/><path d="M279.6 195.0C280.6 196.2 284.0 199.7 285.5 202.4C287.0 205.1 288.0 209.8 288.5 211.3" stroke="#333" stroke-width="0.88"/><path d="M298.8 220.1C299.8 219.9 303.0 218.7 304.7 218.7C306.5 218.7 308.4 219.9 309.2 220.1" stroke="#333" stroke-width="0.88"/><path d="M301.8 203.9C302.8 204.4 305.5 206.6 307.7 206.8C309.9 207.1 313.1 206.6 315.1 205.4C317.1 204.1 318.5 201.2 319.5 199.4C320.5 197.7 320.8 195.7 321.0 195.0" stroke="#1a1a1a" stroke-width="1.30"/><path d="M304.7 209.8C305.7 210.3 308.7 212.0 310.7 212.8C312.6 213.5 315.6 214.0 316.6 214.2" stroke="#333" stroke-width="0.88"/><path d="M276.6 209.8C277.4 211.0 280.2 214.7 281.1 217.2C281.9 219.7 282.1 222.1 281.8 224.6C281.6 227.1 280.7 229.8 279.6 232.0C278.5 234.2 276.9 236.4 275.1 237.9C273.4 239.4 270.2 240.4 269.2 240.9" stroke="#1a1a1a" stroke-width="1.17"/><path d="M281.8 224.6C282.7 225.8 285.1 229.8 287.0 232.0C288.8 234.2 291.4 236.7 292.9 237.9C294.4 239.1 295.4 239.1 295.9 239.4" stroke="#333" stroke-width="0.88"/><path d="M285.5 217.2C286.2 218.7 288.5 223.4 289.9 226.1C291.4 228.8 293.1 231.0 294.4 233.5C295.6 235.9 296.8 239.6 297.3 240.9" stroke="#333" stroke-width="0.88"/><path d="M250.0 225.5C250.7 225.2 253.0 223.8 254.4 224.0C255.9 224.2 257.9 225.6 258.9 226.8C259.9 228.0 260.6 229.9 260.4 231.2C260.1 232.6 259.1 233.9 257.4 234.9C255.7 236.0 251.2 236.9 250.0 237.3" stroke="#1a1a1a" stroke-width="1.30"/><path d="M253.0 224.3 L255.2 228.7 L256.7 224.9" stroke="#1a1a1a" stroke-width="1.04"/><path d="M250.0 232.3C250.7 232.4 253.2 232.9 254.4 232.9C255.7 232.8 256.9 232.1 257.4 232.0" stroke="#333" stroke-width="0.77"/><path d="M250.0 244.1C251.5 243.6 255.9 241.8 258.9 241.2C261.8 240.5 265.0 239.9 267.8 240.1C270.5 240.3 272.9 241.0 275.1 242.3C277.4 243.7 279.6 246.3 281.1 248.3C282.5 250.2 283.5 253.2 284.0 254.2" stroke="#1a1a1a" stroke-width="1.30"/><path d="M236.4 179.2 L239.4 174.8 L242.3 178.5 L246.0 180.7 L249.7 177.8 L252.7 174.1 L255.7 178.5" stroke="#1a1a1a" stroke-width="1.17"/><path d="M237.9 163.0C238.4 163.6 239.5 165.9 240.9 166.7C242.2 167.4 244.2 167.8 246.0 167.7C247.9 167.6 250.6 167.1 252.0 166.2C253.3 165.3 253.8 162.9 254.2 162.2" stroke="#1a1a1a" stroke-width="1.43"/><path d="M239.4 168.9 L243.8 171.8 L246.0 176.3 L248.3 171.8 L252.7 168.9" stroke="#333" stroke-width="0.88"/><path d="M239.4 173.3C237.9 175.3 233.0 181.2 230.5 185.1C228.0 189.1 225.6 195.0 224.6 197.0" stroke="#333" stroke-width="0.77"/><path d="M254.2 173.3C255.7 174.8 260.6 179.0 263.0 182.2C265.5 185.4 268.0 190.8 269.0 192.5" stroke="#181818" stroke-width="1.69"/><path d="M217.2 234.0C218.4 234.7 222.1 236.9 224.6 238.4C227.1 239.9 230.7 242.1 232.0 242.8" stroke="#333" stroke-width="0.88"/><path d="M277.8 235.4C276.4 236.2 271.7 238.6 269.0 239.9C266.3 241.1 262.8 242.3 261.6 242.8" stroke="#333" stroke-width="0.88"/><path d="M211.3 223.6C211.5 224.6 211.8 227.8 212.8 229.5C213.7 231.3 216.4 233.2 217.2 234.0" stroke="#1a1a1a" stroke-width="1.17"/><path d="M283.8 223.6C283.5 224.6 283.3 227.6 282.3 229.5C281.3 231.5 278.6 234.5 277.8 235.4" stroke="#1a1a1a" stroke-width="1.17"/><ellipse cx="228.4" cy="208.0" rx="9.3" ry="9.5" stroke="#1a1a1a" stroke-width="1.04"/><path d="M219.1 208.8C219.1 208.5 219.1 207.5 219.2 206.8C219.3 206.1 219.4 205.4 219.6 204.8C219.9 204.1 220.2 203.5 220.5 202.9C220.9 202.4 221.3 201.8 221.8 201.3C222.3 200.8 222.8 200.4 223.4 200.0C224.0 199.7 224.6 199.4 225.2 199.1C225.8 198.9 226.5 198.7 227.2 198.6C227.9 198.5 228.5 198.5 229.2 198.6C229.9 198.6 230.6 198.8 231.2 199.0C231.8 199.2 232.8 199.7 233.1 199.8" stroke="#111" stroke-width="2.21"/><path d="M227.9 212.8C227.6 212.7 226.5 212.4 226.0 211.9C225.4 211.5 224.9 210.8 224.6 210.2C224.4 209.5 224.2 208.7 224.3 208.0C224.3 207.3 224.6 206.5 224.9 205.9C225.3 205.3 225.9 204.7 226.5 204.3C227.1 204.0 227.8 203.8 228.5 203.7C229.2 203.7 230.0 203.9 230.6 204.2C231.3 204.5 231.9 205.0 232.3 205.6C232.7 206.2 233.0 207.0 233.1 207.7C233.2 208.4 232.9 209.5 232.9 209.9" stroke="#1a1a1a" stroke-width="1.17"/><path d="M219.5 212.5C219.3 212.9 218.2 214.4 218.3 215.1C218.5 215.8 220.1 216.4 220.4 216.6" stroke="#1a1a1a" stroke-width="1.30"/><ellipse cx="262.6" cy="207.3" rx="9.3" ry="9.5" stroke="#1a1a1a" stroke-width="1.04"/><path d="M256.0 200.6C256.3 200.3 257.1 199.6 257.8 199.2C258.4 198.8 259.1 198.4 259.8 198.2C260.6 198.0 261.3 197.9 262.1 197.8C262.8 197.8 263.6 197.8 264.4 198.0C265.1 198.1 265.8 198.4 266.5 198.7C267.2 199.0 267.9 199.4 268.4 199.9C269.0 200.4 269.6 201.0 270.0 201.6C270.5 202.2 270.9 202.9 271.2 203.6C271.4 204.3 271.7 205.0 271.8 205.8C271.9 206.6 271.8 207.7 271.9 208.1" stroke="#111" stroke-width="2.21"/><path d="M261.7 212.1C261.3 211.9 260.2 211.6 259.7 211.2C259.1 210.7 258.7 210.1 258.4 209.4C258.1 208.8 258.0 208.0 258.0 207.3C258.0 206.5 258.3 205.8 258.7 205.1C259.0 204.5 259.6 204.0 260.2 203.6C260.8 203.2 261.6 203.0 262.3 203.0C263.0 203.0 263.7 203.1 264.4 203.5C265.0 203.8 265.6 204.3 266.0 204.9C266.4 205.5 266.7 206.2 266.8 206.9C266.9 207.6 266.6 208.8 266.6 209.1" stroke="#1a1a1a" stroke-width="1.17"/><path d="M271.6 211.6C271.8 212.0 273.2 213.5 273.1 214.2C273.0 215.0 271.4 215.7 271.0 216.0" stroke="#1a1a1a" stroke-width="1.30"/><ellipse cx="236.4" cy="196.4" rx="5.3" ry="2.2" stroke="#1a1a1a" stroke-width="0.98" transform="rotate(42 236.4 196.4)"/><ellipse cx="254.9" cy="194.0" rx="5.0" ry="2.1" stroke="#1a1a1a" stroke-width="0.98" transform="rotate(-52 254.9 194.0)"/><path d="M197.1 181.2C194.7 181.8 187.2 183.4 182.9 184.7C178.7 186.0 171.6 187.6 171.6 188.9C171.6 190.2 179.0 191.7 182.9 192.5C186.9 193.2 193.2 193.4 195.3 193.5" stroke="#333" stroke-width="0.88"/><path d="M193.5 200.6C191.8 201.0 186.0 202.9 182.9 203.1C179.9 203.2 174.9 200.9 175.2 201.6C175.5 202.4 181.2 206.4 184.7 207.6C188.2 208.9 194.4 209.1 196.4 209.4" stroke="#333" stroke-width="0.88"/><path d="M196.4 212.9C195.0 213.8 188.1 216.8 188.2 218.2C188.4 219.7 195.6 221.2 197.1 221.8" stroke="#666" stroke-width="0.77"/><path d="M200.6 250.0C202.1 248.8 206.2 243.5 209.4 242.9C212.6 242.4 216.5 246.9 220.0 246.5C223.5 246.1 226.8 240.3 230.6 240.5C234.4 240.6 238.8 247.5 242.9 247.5C247.1 247.5 251.2 240.7 255.3 240.5C259.4 240.2 263.8 246.1 267.6 246.1C271.5 246.1 274.7 240.0 278.2 240.5C281.8 240.9 287.1 247.5 288.8 248.9" stroke="#333" stroke-width="0.88"/><path d="M203.4 256.0C205.9 256.6 213.4 259.4 218.2 259.5C223.1 259.7 230.0 257.5 232.4 257.1" stroke="#666" stroke-width="0.66"/><path d="M257.1 257.1C259.4 257.5 266.2 259.8 271.2 259.5C276.2 259.2 284.4 256.0 287.1 255.3" stroke="#666" stroke-width="0.66"/><path d="M239.4 170.6C237.1 172.9 229.1 179.4 225.3 184.7C221.5 190.0 217.9 199.4 216.5 202.4" stroke="#333" stroke-width="0.77"/><path d="M254.2 170.6C256.6 172.9 264.8 179.4 268.4 184.7C271.9 190.0 274.2 199.4 275.4 202.4" stroke="#333" stroke-width="0.77"/><path d="M186.5 142.4C185.9 144.7 184.0 151.8 182.9 156.5C181.9 161.2 180.6 168.2 180.1 170.6" stroke="#666" stroke-width="0.55"/><path d="M299.4 145.9C300.6 148.2 305.3 155.6 306.5 160.0C307.6 164.4 306.5 170.3 306.5 172.4" stroke="#666" stroke-width="0.55"/><ellipse cx="246.5" cy="270.6" rx="9.2" ry="8.8" stroke="#1a1a1a" stroke-width="1.10"/><ellipse cx="246.8" cy="270.9" rx="4.8" ry="4.2" stroke="#1a1a1a" stroke-width="1.17"/><path d="M223.5 268.3C223.8 266.5 224.4 264.9 226.2 264.1C227.9 263.2 232.2 262.4 234.1 263.0C236.0 263.6 237.4 265.7 237.6 267.9C237.9 270.2 237.3 274.6 235.9 276.4C234.5 278.2 231.1 279.1 229.2 278.9C227.3 278.6 225.4 276.8 224.4 275.0C223.5 273.2 223.2 270.1 223.5 268.3Z" stroke="#333" stroke-width="0.88"/><path d="M255.3 264.4C256.5 264.3 260.4 262.8 262.4 263.7C264.3 264.6 266.4 267.6 266.9 269.7C267.5 271.8 266.9 274.9 265.5 276.4C264.2 277.9 260.7 279.1 258.8 278.9C257.0 278.6 255.1 275.6 254.4 275.0" stroke="#333" stroke-width="0.88"/><path d="M237.6 278.5C237.9 279.6 237.9 283.7 239.4 285.2C240.9 286.8 244.1 287.7 246.5 287.7C248.8 287.7 251.9 286.6 253.5 285.2C255.1 283.9 255.7 280.4 256.2 279.4" stroke="#333" stroke-width="0.88"/><path d="M234.5 262.6C235.1 261.9 236.0 259.1 238.0 258.1C240.0 257.0 243.6 256.2 246.5 256.3C249.3 256.4 253.2 257.4 254.9 258.8C256.7 260.1 256.7 263.5 257.1 264.4" stroke="#333" stroke-width="0.88"/><path d="M235.9 283.8 L232.4 292.6 L228.8 303.2 L239.4 310.3 L253.5 313.8 L264.1 303.2 L260.6 292.6 L257.1 283.8" stroke="#1a1a1a" stroke-width="1.17"/><path d="M242.9 287.4C243.5 288.8 245.3 293.5 246.5 296.2C247.6 298.8 249.4 302.1 250.0 303.2" stroke="#666" stroke-width="0.66"/><path d="M200.6 250.3C201.8 251.5 204.1 255.4 207.6 257.4C211.2 259.3 217.4 260.9 221.8 261.8C226.2 262.6 232.1 262.5 234.1 262.6" stroke="#1a1a1a" stroke-width="1.30"/><path d="M260.6 262.6C262.4 262.1 267.6 260.6 271.2 259.1C274.7 257.6 279.4 255.6 281.8 253.8C284.1 252.1 284.7 249.4 285.3 248.5" stroke="#1a1a1a" stroke-width="1.30"/><path d="M198.8 252.1C198.5 253.8 197.6 258.8 197.1 262.6C196.5 266.5 194.7 271.5 195.3 275.0C195.9 278.5 199.4 280.3 200.6 283.8C201.8 287.4 201.2 292.4 202.4 296.2C203.5 300.0 206.5 303.8 207.6 306.8C208.8 309.7 209.1 312.6 209.4 313.8" stroke="#1a1a1a" stroke-width="1.30"/><path d="M211.2 262.6C211.3 265.0 211.8 272.1 212.1 276.8C212.4 281.5 212.2 286.2 212.9 290.9C213.7 295.6 215.6 300.9 216.5 305.0C217.4 309.1 218.8 312.6 218.2 315.6C217.6 318.5 215.0 320.3 212.9 322.6C210.9 325.0 208.5 326.8 205.9 329.7C203.2 332.6 199.7 337.7 197.1 340.3C194.4 342.9 191.2 344.3 190.0 345.1" stroke="#1a1a1a" stroke-width="1.30"/><path d="M281.8 253.8C282.6 255.9 285.6 261.8 287.1 266.2C288.5 270.6 290.3 275.6 290.6 280.3C290.9 285.0 289.7 290.3 288.8 294.4C287.9 298.5 285.3 301.5 285.3 305.0C285.3 308.5 287.1 312.6 288.8 315.6C290.6 318.5 294.7 321.5 295.9 322.6" stroke="#1a1a1a" stroke-width="1.30"/><path d="M272.9 260.9C273.2 262.9 274.1 269.1 274.7 273.2C275.3 277.4 276.5 281.5 276.5 285.6C276.5 289.7 273.8 294.1 274.7 297.9C275.6 301.8 279.4 305.0 281.8 308.5C284.1 312.1 287.6 317.4 288.8 319.1" stroke="#1a1a1a" stroke-width="1.17"/><path d="M190.0 271.5C190.9 272.9 194.7 277.1 195.3 280.3C195.9 283.5 192.9 287.4 193.5 290.9C194.1 294.4 196.8 298.5 198.8 301.5C200.9 304.4 204.7 307.4 205.9 308.5" stroke="#1a1a1a" stroke-width="1.17"/><path d="M190.0 315.6C191.8 315.6 197.4 315.9 200.6 315.6C203.8 315.3 207.9 314.1 209.4 313.8" stroke="#1a1a1a" stroke-width="1.17"/><path d="M200.6 283.8C201.5 283.7 204.0 283.4 205.9 282.9C207.8 282.5 211.0 281.5 212.1 281.2" stroke="#333" stroke-width="0.77"/><path d="M276.5 282.1C277.6 281.9 281.3 281.6 283.5 281.2C285.7 280.7 288.7 279.7 289.7 279.4" stroke="#333" stroke-width="0.77"/><path d="M234.1 310.3 L242.9 313.8 L246.5 319.1 L242.9 322.6" stroke="#1a1a1a" stroke-width="1.17"/><path d="M255.3 313.8 L262.4 310.3 L267.6 315.6 L260.6 320.9Z" stroke="#1a1a1a" stroke-width="1.17"/><path d="M225.3 315.6C226.8 316.8 231.2 320.6 234.1 322.6C237.1 324.7 240.0 326.5 242.9 327.9C245.9 329.4 248.8 331.5 251.8 331.5C254.7 331.5 257.6 329.7 260.6 327.9C263.5 326.2 267.6 322.9 269.4 320.9C271.2 318.8 270.9 316.5 271.2 315.6" stroke="#1a1a1a" stroke-width="1.17"/><path d="M214.7 324.4C216.5 325.3 221.2 327.9 225.3 329.7C229.4 331.5 234.7 333.8 239.4 335.0C244.1 336.2 249.1 337.1 253.5 336.8C257.9 336.5 263.8 333.8 265.9 333.2" stroke="#1a1a1a" stroke-width="1.17"/><path d="M207.6 333.2C209.4 334.1 214.1 336.8 218.2 338.5C222.4 340.3 230.0 342.9 232.4 343.8" stroke="#333" stroke-width="0.88"/><path d="M218.2 315.6C219.4 315.6 222.6 316.5 225.3 315.6C227.9 314.7 232.6 311.2 234.1 310.3" stroke="#333" stroke-width="0.88"/><path d="M250.9 322.6C250.7 323.3 249.6 325.6 249.6 326.5C249.7 327.5 250.9 328.4 251.4 328.3C251.9 328.2 252.6 326.8 252.5 325.8C252.4 324.9 251.1 323.2 250.9 322.6" stroke="#333" stroke-width="0.66"/><ellipse cx="271.2" cy="326.2" rx="4.4" ry="4.4" stroke="#666" stroke-width="0.66"/><ellipse cx="278.2" cy="333.2" rx="6.2" ry="6.2" stroke="#666" stroke-width="0.66"/><ellipse cx="288.8" cy="329.7" rx="5.3" ry="5.3" stroke="#666" stroke-width="0.66"/><ellipse cx="295.9" cy="326.5" rx="5.3" ry="5.3" stroke="#666" stroke-width="0.66"/><ellipse cx="299.4" cy="337.1" rx="5.3" ry="5.3" stroke="#666" stroke-width="0.66"/><path d="M295.9 245.0C297.1 246.2 300.6 250.3 302.9 252.1C305.3 253.8 308.8 255.0 310.0 255.6" stroke="#333" stroke-width="0.88"/><path d="M294.1 260.9C295.0 262.1 299.1 265.3 299.4 267.9C299.7 270.6 297.1 273.8 295.9 276.8C294.7 279.7 292.9 284.1 292.4 285.6" stroke="#333" stroke-width="0.88"/><path d="M310.0 297.9C309.1 299.4 307.1 304.1 304.7 306.8C302.4 309.4 298.5 312.4 295.9 313.8C293.2 315.3 290.0 315.3 288.8 315.6" stroke="#1a1a1a" stroke-width="1.30"/><path d="M190.0 255.6C190.6 257.1 193.2 261.2 193.5 264.4C193.8 267.6 192.1 273.2 191.8 275.0" stroke="#333" stroke-width="0.77"/><path d="M288.8 319.1C290.0 320.9 293.2 326.2 295.9 329.7C298.5 333.2 302.4 337.9 304.7 340.3C307.1 342.6 309.1 343.2 310.0 343.8" stroke="#1a1a1a" stroke-width="1.17"/><path d="M283.5 315.6C284.7 317.6 288.2 324.1 290.6 327.9C292.9 331.8 296.5 336.8 297.6 338.5" stroke="#333" stroke-width="0.77"/><path d="M162.6 264.7C161.9 265.9 159.3 269.1 158.2 271.8C157.2 274.4 156.2 277.6 156.5 280.6C156.8 283.5 158.2 286.5 160.0 289.4C161.8 292.4 165.0 295.9 167.1 298.2C169.1 300.6 171.5 302.6 172.4 303.5" stroke="#333" stroke-width="0.88"/><path d="M182.9 261.2C183.8 262.4 186.5 265.6 188.2 268.2C190.0 270.9 191.5 274.4 193.5 277.1C195.6 279.7 199.4 282.9 200.6 284.1" stroke="#1e1e1e" stroke-width="1.17"/><path d="M166.2 268.2C166.9 270.3 169.0 276.2 170.6 280.6C172.2 285.0 173.8 289.8 175.9 294.7C177.9 299.6 181.8 307.5 182.9 310.1" stroke="#1e1e1e" stroke-width="1.17"/><path d="M156.5 280.6C157.4 282.6 159.4 289.4 161.8 292.9C164.1 296.5 169.1 300.3 170.6 301.8" stroke="#666" stroke-width="0.66"/><path d="M329.4 261.2C329.9 262.6 331.8 266.8 332.1 270.0C332.4 273.2 332.2 276.8 331.2 280.6C330.1 284.4 327.9 289.1 325.9 292.9C323.8 296.8 320.9 300.7 318.8 303.5C316.8 306.4 314.4 309.0 313.5 310.1" stroke="#1e1e1e" stroke-width="1.17"/><path d="M322.4 268.2C321.8 270.3 320.3 276.2 318.8 280.6C317.4 285.0 315.6 289.8 313.5 294.7C311.5 299.6 307.6 307.5 306.5 310.1" stroke="#333" stroke-width="0.88"/><path d="M311.8 268.2 L312.6 273.5" stroke="#666" stroke-width="0.66"/><path d="M182.9 310.0C183.8 310.9 185.9 314.1 188.2 315.3C190.6 316.5 194.1 316.8 197.1 317.1C200.0 317.4 203.5 317.9 205.9 317.1C208.2 316.2 210.1 312.9 211.2 311.8C212.2 310.6 211.9 310.3 212.1 310.0" stroke="#1e1e1e" stroke-width="1.30"/><path d="M211.2 315.3C210.3 316.8 207.6 321.2 205.9 324.1C204.1 327.1 201.5 331.5 200.6 332.9" stroke="#333" stroke-width="0.77"/><path d="M227.1 315.3C225.6 316.2 220.9 318.5 218.2 320.6C215.6 322.6 212.9 325.6 211.2 327.6C209.4 329.7 208.4 331.2 207.6 332.9C206.9 334.7 206.9 337.4 206.8 338.2" stroke="#1e1e1e" stroke-width="1.17"/><path d="M207.6 332.9C209.4 334.1 214.1 337.9 218.2 340.0C222.4 342.1 227.1 343.5 232.4 345.3C237.6 347.1 247.1 349.7 250.0 350.6" stroke="#333" stroke-width="0.88"/><path d="M206.8 338.2C208.7 339.3 214.0 342.5 218.2 344.4C222.5 346.3 227.1 348.1 232.4 349.7C237.6 351.3 247.1 353.4 250.0 354.1" stroke="#333" stroke-width="0.88"/><path d="M212.9 326.8C215.0 327.5 220.9 329.9 225.3 331.2C229.7 332.5 235.3 333.8 239.4 334.7C243.5 335.6 248.2 336.2 250.0 336.5" stroke="#333" stroke-width="0.77"/><path d="M206.8 338.2C206.5 340.3 205.4 346.8 205.0 350.6C204.6 354.4 204.0 357.9 204.1 361.2C204.3 364.4 205.6 368.5 205.9 370.0" stroke="#1e1e1e" stroke-width="1.17"/><path d="M204.1 361.2C206.5 361.8 212.9 364.1 218.2 364.7C223.5 365.3 230.6 365.0 235.9 364.7C241.2 364.4 247.6 363.2 250.0 362.9" stroke="#333" stroke-width="0.88"/><path d="M205.9 370.0C207.9 370.4 213.2 372.2 218.2 372.6C223.2 373.1 230.6 372.9 235.9 372.6C241.2 372.4 247.6 371.2 250.0 370.9" stroke="#333" stroke-width="0.88"/><path d="M205.9 370.0C206.2 372.4 207.1 379.4 207.6 384.1C208.2 388.8 208.5 393.9 209.4 398.2C210.3 402.6 212.4 408.1 212.9 410.1" stroke="#1e1e1e" stroke-width="1.17"/><path d="M246.5 371.8C246.2 374.1 245.3 381.5 244.7 385.9C244.1 390.3 243.5 394.2 242.9 398.2C242.4 402.3 241.5 408.1 241.2 410.1" stroke="#333" stroke-width="0.88"/><path d="M188.2 354.1C187.6 355.6 185.7 359.7 184.7 362.9C183.7 366.2 182.5 371.8 182.1 373.5" stroke="#666" stroke-width="0.66"/><ellipse cx="181.5" cy="380.9" rx="6.7" ry="6.7" stroke="#666" stroke-width="0.77"/><ellipse cx="176.2" cy="394.4" rx="6.7" ry="6.4" stroke="#666" stroke-width="0.77"/><ellipse cx="188.9" cy="398.9" rx="6.7" ry="6.4" stroke="#666" stroke-width="0.77"/><ellipse cx="188.6" cy="388.0" rx="5.6" ry="6.0" stroke="#666" stroke-width="0.77"/><ellipse cx="200.9" cy="386.2" rx="5.3" ry="7.8" stroke="#666" stroke-width="0.77" transform="rotate(10 200.9 386.2)"/><path d="M239.4 310.0 L242.9 317.1 L235.9 315.3 L228.8 313.5" stroke="#333" stroke-width="0.88"/><path d="M202.4 377.1C202.6 379.7 203.2 388.2 204.1 392.9C205.0 397.6 207.1 403.2 207.6 405.3" stroke="#666" stroke-width="0.66"/><path d="M232.4 327.6C232.9 328.2 235.6 330.1 235.9 331.2C236.2 332.2 234.4 333.4 234.1 333.8" stroke="#666" stroke-width="0.66"/><ellipse cx="289.2" cy="342.1" rx="16.2" ry="6.0" stroke="#333" stroke-width="0.88" transform="rotate(-3 289.2 342.1)"/><path d="M272.9 345.3C272.6 346.5 270.9 350.3 271.2 352.4C271.5 354.4 274.1 356.8 274.7 357.6" stroke="#1e1e1e" stroke-width="1.17"/><path d="M305.1 341.8C305.6 342.9 308.0 346.8 308.2 348.8C308.5 350.9 306.8 353.2 306.5 354.1" stroke="#1e1e1e" stroke-width="1.17"/><path d="M274.7 357.6C277.1 357.4 283.5 356.8 288.8 356.2C294.1 355.6 303.5 354.5 306.5 354.1" stroke="#333" stroke-width="0.88"/><path d="M276.5 349.7C278.5 350.0 284.4 351.8 288.8 351.5C293.2 351.2 300.6 348.5 302.9 347.9" stroke="#666" stroke-width="0.66"/><path d="M264.1 362.9C266.2 362.6 271.5 361.8 276.5 361.2C281.5 360.6 289.1 360.0 294.1 359.4C299.1 358.8 304.4 357.9 306.5 357.6" stroke="#333" stroke-width="0.88"/><path d="M264.1 362.9C265.0 365.3 267.4 372.9 269.4 377.1C271.5 381.2 273.8 384.4 276.5 387.6C279.1 390.9 282.4 394.1 285.3 396.5C288.2 398.8 292.6 400.9 294.1 401.8" stroke="#1e1e1e" stroke-width="1.17"/><path d="M306.5 357.6C307.1 359.7 308.5 365.6 310.0 370.0C311.5 374.4 313.8 379.7 315.3 384.1C316.8 388.5 317.9 392.6 318.8 396.5C319.7 400.3 320.3 405.3 320.6 407.1" stroke="#1e1e1e" stroke-width="1.17"/><path d="M285.3 396.5C287.6 397.1 294.1 400.0 299.4 400.0C304.7 400.0 314.1 397.1 317.1 396.5" stroke="#333" stroke-width="0.88"/><path d="M269.4 368.2C272.1 368.5 279.7 370.3 285.3 370.0C290.9 369.7 300.0 367.1 302.9 366.5" stroke="#333" stroke-width="0.77"/><path d="M304.7 340.0C306.5 340.9 312.1 342.6 315.3 345.3C318.5 347.9 321.8 352.4 324.1 355.9C326.5 359.4 328.2 363.5 329.4 366.5C330.6 369.4 330.9 372.4 331.2 373.5" stroke="#1e1e1e" stroke-width="1.17"/><ellipse cx="308.2" cy="332.9" rx="6.2" ry="6.2" stroke="#333" stroke-width="0.77"/><ellipse cx="301.2" cy="338.2" rx="4.4" ry="3.9" stroke="#666" stroke-width="0.77"/><ellipse cx="320.6" cy="372.1" rx="6.0" ry="6.0" stroke="#333" stroke-width="0.77"/><ellipse cx="329.4" cy="378.8" rx="6.0" ry="6.0" stroke="#333" stroke-width="0.77"/><ellipse cx="337.4" cy="375.3" rx="6.0" ry="6.0" stroke="#333" stroke-width="0.77"/><ellipse cx="332.9" cy="387.6" rx="6.0" ry="6.0" stroke="#333" stroke-width="0.77"/><ellipse cx="318.8" cy="382.4" rx="2.6" ry="4.4" stroke="#333" stroke-width="0.77"/><ellipse cx="279.1" cy="391.5" rx="6.0" ry="6.4" stroke="#333" stroke-width="0.77"/><path d="M267.6 310.0C269.4 311.5 274.7 315.9 278.2 318.8C281.8 321.8 285.9 324.7 288.8 327.6C291.8 330.6 294.1 334.1 295.9 336.5C297.6 338.8 298.8 340.9 299.4 341.8" stroke="#1e1e1e" stroke-width="1.17"/><path d="M281.8 310.0C282.9 310.9 285.9 314.4 288.8 315.3C291.8 316.2 296.5 316.2 299.4 315.3C302.4 314.4 305.3 310.9 306.5 310.0" stroke="#1e1e1e" stroke-width="1.17"/><path d="M250.0 332.9C251.8 332.6 257.6 331.3 260.6 331.2C263.5 331.0 266.5 331.9 267.6 332.1" stroke="#333" stroke-width="0.77"/><path d="M250.0 350.6C251.8 350.9 257.1 352.4 260.6 352.4C264.1 352.4 269.4 350.9 271.2 350.6" stroke="#333" stroke-width="0.77"/><path d="M250.0 355.9C251.2 357.1 254.7 360.3 257.1 362.9C259.4 365.6 261.5 368.8 264.1 371.8C266.8 374.7 270.0 378.5 272.9 380.6C275.9 382.6 280.3 383.5 281.8 384.1" stroke="#333" stroke-width="0.88"/><path d="M262.4 364.7C263.5 366.5 266.2 372.1 269.4 375.3C272.6 378.5 279.7 382.6 281.8 384.1" stroke="#666" stroke-width="0.77"/><path d="M294.1 401.8C293.7 402.5 292.1 404.8 291.5 406.2C290.9 407.6 290.7 409.4 290.6 410.1" stroke="#1e1e1e" stroke-width="1.04"/><path d="M290.9 405.3 L295.9 410.1" stroke="#333" stroke-width="0.77"/><path d="M211.2 410.0C211.5 411.8 212.4 417.1 212.9 420.6C213.5 424.1 214.3 428.2 214.7 431.2C215.1 434.1 215.4 437.1 215.6 438.2" stroke="#1e1e1e" stroke-width="1.17"/><path d="M241.2 410.0C241.5 411.8 242.8 417.1 242.9 420.6C243.1 424.1 242.4 428.1 242.1 431.2C241.8 434.3 241.3 437.8 241.2 439.1" stroke="#1e1e1e" stroke-width="1.17"/><path d="M214.7 424.1C216.8 424.6 222.4 426.6 227.1 426.8C231.8 426.9 240.3 425.3 242.9 425.0" stroke="#333" stroke-width="0.77"/><path d="M214.7 431.2C216.8 431.6 222.4 433.8 227.1 433.8C231.8 433.8 240.3 431.6 242.9 431.2" stroke="#333" stroke-width="0.77"/><path d="M214.7 436.5C216.5 437.1 220.9 439.6 225.3 440.0C229.7 440.4 238.5 439.3 241.2 439.1" stroke="#1e1e1e" stroke-width="1.17"/><path d="M215.6 439.1C217.5 439.7 222.8 442.4 227.1 442.6C231.3 442.9 238.8 441.2 241.2 440.9" stroke="#333" stroke-width="0.88"/><path d="M212.9 413.5C215.0 414.1 221.5 417.1 225.3 417.1C229.1 417.1 233.2 414.7 235.9 413.5C238.5 412.4 240.3 410.6 241.2 410.0" stroke="#333" stroke-width="0.77"/><path d="M216.5 440.0C216.2 441.5 216.2 446.5 214.7 448.8C213.2 451.2 209.7 452.4 207.6 454.1C205.6 455.9 203.4 457.4 202.4 459.4C201.3 461.5 200.9 464.7 201.5 466.5C202.1 468.2 204.7 470.3 205.9 470.0C207.1 469.7 207.6 466.2 208.5 464.7C209.4 463.2 210.7 461.8 211.2 461.2" stroke="#1e1e1e" stroke-width="1.17"/><path d="M208.5 466.5C209.0 467.4 209.6 470.6 211.2 471.8C212.8 472.9 216.2 473.8 218.2 473.5C220.3 473.2 222.5 471.8 223.5 470.0C224.6 468.2 224.6 464.6 224.4 462.9C224.3 461.3 222.9 460.7 222.6 460.3" stroke="#1e1e1e" stroke-width="1.17"/><path d="M224.4 462.9C224.7 464.3 224.9 469.0 226.2 470.9C227.5 472.8 230.4 474.4 232.4 474.4C234.3 474.4 236.5 472.5 237.6 470.9C238.8 469.3 239.1 465.7 239.4 464.7" stroke="#1e1e1e" stroke-width="1.17"/><path d="M239.4 464.7C239.9 465.3 241.5 468.5 242.1 468.2C242.6 467.9 243.1 465.0 242.9 462.9C242.8 460.9 241.8 458.2 241.2 455.9C240.6 453.5 239.4 451.5 239.4 448.8C239.4 446.2 240.9 441.5 241.2 440.0" stroke="#1e1e1e" stroke-width="1.17"/><path d="M212.9 450.6C211.6 451.6 206.8 454.7 205.0 456.8C203.2 458.8 202.8 461.9 202.4 462.9" stroke="#666" stroke-width="0.66"/><path d="M290.6 410.0C291.2 411.5 292.6 415.9 294.1 418.8C295.6 421.8 298.5 426.2 299.4 427.6" stroke="#1e1e1e" stroke-width="1.17"/><path d="M296.8 410.0C297.8 412.1 301.0 417.9 302.9 422.4C304.9 426.8 307.4 434.1 308.2 436.5" stroke="#666" stroke-width="0.77"/><path d="M299.4 410.0C301.2 412.4 307.1 420.6 310.0 424.1C312.9 427.6 315.9 430.0 317.1 431.2" stroke="#333" stroke-width="0.77"/><path d="M320.6 410.0C320.7 411.8 321.2 416.8 321.5 420.6C321.8 424.4 322.2 430.9 322.4 432.9" stroke="#1e1e1e" stroke-width="1.17"/><path d="M298.5 427.6C300.1 428.4 304.3 431.0 308.2 432.1C312.2 433.1 319.6 433.8 322.4 433.8C325.1 433.8 324.6 432.4 325.0 432.1" stroke="#1e1e1e" stroke-width="1.17"/><path d="M298.5 427.6C298.5 429.7 298.2 436.2 298.5 440.0C298.8 443.8 299.0 447.4 300.3 450.6C301.6 453.8 304.3 457.2 306.5 459.4C308.7 461.6 311.2 462.9 313.5 463.8C315.9 464.7 319.4 464.6 320.6 464.7" stroke="#1e1e1e" stroke-width="1.17"/><path d="M320.6 464.7C321.0 463.8 322.9 461.2 323.2 459.4C323.5 457.6 322.8 455.3 322.4 454.1C321.9 452.9 320.9 452.6 320.6 452.4" stroke="#1e1e1e" stroke-width="1.04"/><path d="M323.2 462.9C324.0 463.5 325.9 466.2 327.6 466.5C329.4 466.8 332.4 465.9 333.8 464.7C335.3 463.5 336.2 461.0 336.5 459.4C336.8 457.8 335.7 455.7 335.6 455.0" stroke="#1e1e1e" stroke-width="1.17"/><path d="M336.5 461.2C337.4 461.6 340.0 463.8 341.8 463.8C343.5 463.8 346.3 462.6 347.1 461.2C347.8 459.7 347.1 456.9 346.2 455.0C345.3 453.1 342.5 450.6 341.8 449.7" stroke="#1e1e1e" stroke-width="1.17"/><path d="M325.0 432.1C325.4 433.4 326.0 437.8 327.6 440.0C329.3 442.2 332.4 443.7 334.7 445.3C337.1 446.9 339.9 448.1 341.8 449.7C343.7 451.3 345.0 453.1 346.2 455.0C347.4 456.9 348.4 460.1 348.8 461.2" stroke="#262626" stroke-width="1.30"/><path d="M338.2 463.8C339.4 463.8 343.4 464.6 345.3 463.8C347.2 463.1 349.0 460.1 349.7 459.4" stroke="#666" stroke-width="0.66"/><path d="M134.1 323.5C133.5 322.8 132.4 320.1 130.6 319.1C128.8 318.2 125.9 317.7 123.5 317.9C121.2 318.0 118.4 318.8 116.5 320.0C114.6 321.2 112.9 322.9 112.1 325.3C111.2 327.6 110.7 330.9 111.2 334.1C111.6 337.4 112.9 341.5 114.7 344.7C116.5 347.9 118.8 351.0 121.8 353.5C124.7 356.0 128.5 358.2 132.4 359.7C136.2 361.2 140.6 362.1 144.7 362.4C148.8 362.6 152.9 362.2 157.1 361.5C161.2 360.7 165.3 359.6 169.4 357.9C173.5 356.3 177.9 354.3 181.8 351.8C185.6 349.3 189.4 345.9 192.4 342.9C195.3 340.0 198.2 335.6 199.4 334.1" stroke="#666" stroke-width="0.83"/><path d="M134.1 323.5C134.3 324.7 135.4 327.9 135.0 330.6C134.6 333.2 132.4 337.1 131.5 339.4C130.6 341.8 129.0 343.1 129.7 344.7C130.4 346.3 133.1 348.1 135.9 349.1C138.7 350.1 142.9 350.9 146.5 350.9C150.0 350.9 153.5 350.4 157.1 349.1C160.6 347.8 164.1 345.4 167.6 342.9C171.2 340.4 174.7 337.1 178.2 334.1C181.8 331.2 185.9 327.6 188.8 325.3C191.8 322.9 194.7 320.9 195.9 320.0" stroke="#666" stroke-width="0.83"/><path d="M131.5 325.3C131.2 326.8 130.1 331.2 129.7 334.1C129.3 337.1 129.0 341.5 128.8 342.9" stroke="#666" stroke-width="0.66"/><path d="M112.9 327.1C112.7 328.5 111.1 332.6 111.5 335.9C112.0 339.1 114.9 344.7 115.6 346.5" stroke="#666" stroke-width="0.55"/><path d="M142.9 363.2C145.3 363.1 152.4 363.4 157.1 362.7C161.8 362.0 166.5 360.8 171.2 358.8C175.9 356.9 182.9 352.2 185.3 350.9" stroke="#666" stroke-width="0.55"/></svg>
<div style="left:0px;top:571px;width:680px;height:4px;background:#2a2e39;"></div>
<div style="left:0px;top:571px;width:29px;height:4px;background:#15161a;"></div>
</div>
</body></html>
